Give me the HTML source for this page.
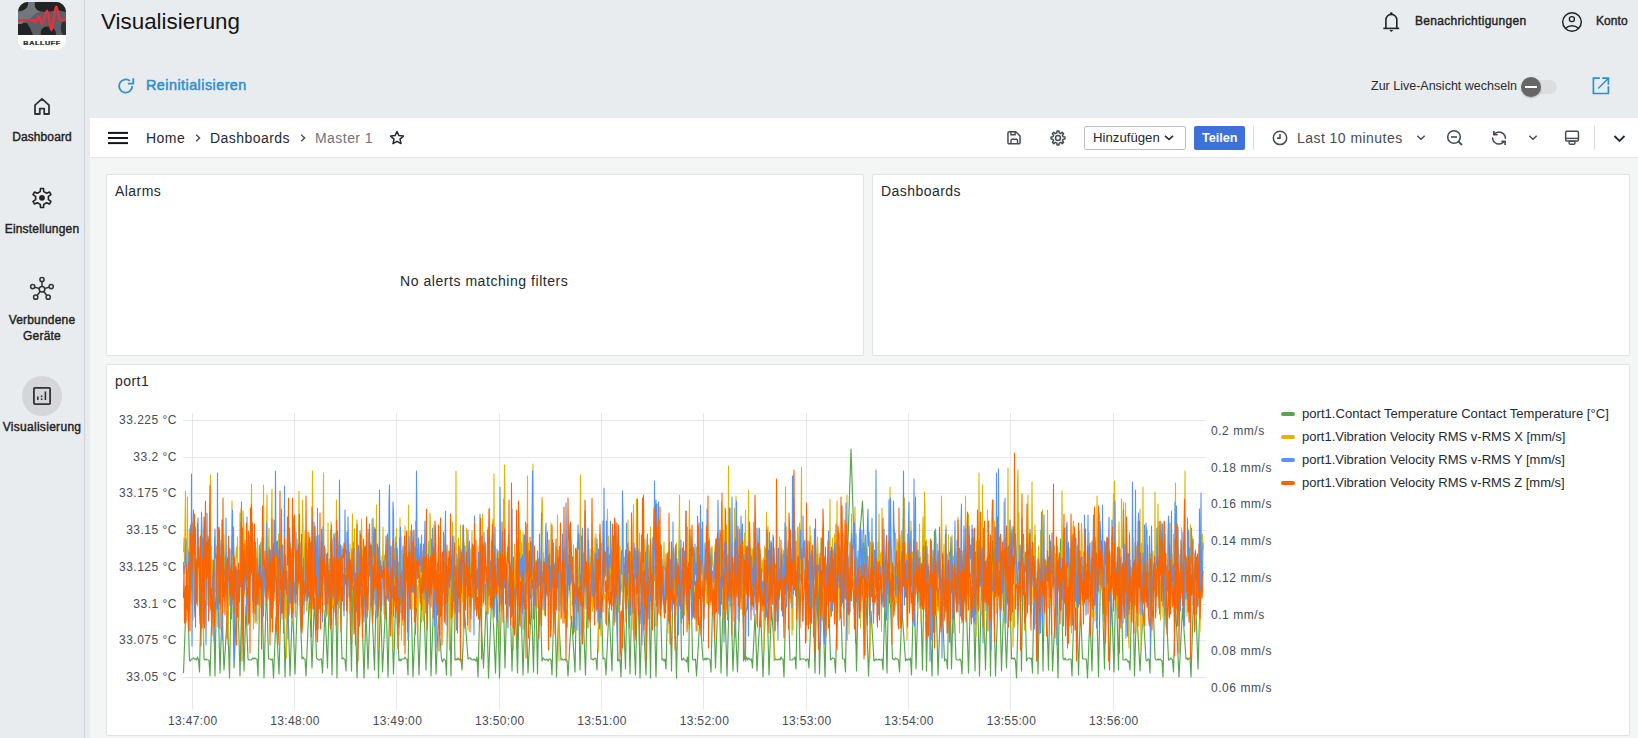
<!DOCTYPE html>
<html><head><meta charset="utf-8">
<style>
*{box-sizing:border-box;margin:0;padding:0}
html,body{width:1638px;height:738px;overflow:hidden;background:#e9ecef;font-family:"Liberation Sans",sans-serif;color:#1b1b1b}
.abs{position:absolute}
.t{position:absolute;white-space:nowrap;line-height:1}
#side{left:0;top:0;width:85px;height:738px;border-right:1px solid #cfd2d6;background:#e9ecef}
.nav{position:absolute;left:0;width:84px;text-align:center;font-size:12px;font-weight:400;color:#222;line-height:16px;-webkit-text-stroke:0.4px #222}
#graf{left:90px;top:118px;width:1548px;height:620px;background:#f4f5f5}
#tb{left:90px;top:118px;width:1548px;height:40px;background:#fff;border-bottom:1px solid #e4e5e6}
.panel{position:absolute;background:#fff;border:1px solid #e1e2e3;border-radius:2px}
.gt{font-size:14px;color:#24292e;letter-spacing:0.45px}
</style></head>
<body>
<!-- sidebar -->
<div id="side" class="abs"></div>

<!-- logo -->
<svg class="abs" style="left:18px;top:2px" width="48" height="48" viewBox="0 0 48 48">
  <defs><clipPath id="lc"><rect x="0" y="0" width="48" height="48" rx="10"/></clipPath></defs>
  <g clip-path="url(#lc)">
    <rect width="48" height="48" fill="#fff"/>
    <rect width="48" height="33" fill="#5b6067"/>
    <path d="M0 0 H11 C12 4 9 9 3 9.5 L0 9.5Z" fill="#222325"/>
    <path d="M16 0 H48 V10 C44 9 40 8 36 9 C30 10 24 10 20 9 C17 7 16 4 16 0Z" fill="#222325"/>
    <path d="M10 0 H17 C16 5 18 8 22 9.5 L17 12 L13 16 L8 19 L0 19 V9.5 C6 9 11 6 10 0Z" fill="#717680"/>
    <path d="M0 21 L9 21 L12 26 L15 33 L0 33Z" fill="#222325"/>
    <path d="M23 33 C22 29 24 25 29 24.5 C34 24 38 27 38 33Z" fill="#222325"/>
    <path d="M44 20 L48 19 V33 H45 C43 30 42 26 44 20Z" fill="#2e3033"/>
    <path d="M0 19 H6 L4 22 L0 22Z" fill="#717680"/>
    <path d="M0 18.1 H16.2 C16.8 18.1 17 21 17.6 20.6 C18.6 19.8 19.6 14 20.6 14.2 C21.8 14.4 23 22 24.2 22 C25.8 22 27.5 8.4 29.1 8.6 C30.8 8.8 31.8 28.4 33.3 28.3 C35 28.2 36.6 4.5 38.3 4.7 C39.8 4.9 40.6 17.6 42 18 H48" fill="none" stroke="#e5323e" stroke-width="2.4" stroke-linejoin="round"/>
  </g>
  <text x="24" y="42.9" text-anchor="middle" font-family="Liberation Sans" font-weight="700" font-size="6.1" letter-spacing="0.5" fill="#1a1a1a" stroke="#1a1a1a" stroke-width="0.25" transform="translate(24 0) scale(1.18 1) translate(-24 0)">BALLUFF</text>
</svg>

<!-- nav items -->
<svg class="abs" style="left:33px;top:97px" width="18" height="19" viewBox="0 0 18 19"><path d="M2 8.2 L9 1.8 L16 8.2 V17 H11.2 V11.6 H6.8 V17 H2 Z" fill="none" stroke="#333" stroke-width="1.8" stroke-linejoin="round"/></svg>
<div class="nav" style="top:129px;letter-spacing:0.1px">Dashboard</div>

<svg class="abs" style="left:31px;top:187px" width="22" height="22" viewBox="0 0 22 22" id="gear1"><path d="M9.23 4.64 L9.50 1.52 L12.50 1.52 L12.77 4.64 L15.62 6.28 L18.46 4.96 L19.96 7.56 L17.39 9.36 L17.39 12.64 L19.96 14.44 L18.46 17.04 L15.62 15.72 L12.77 17.36 L12.50 20.48 L9.50 20.48 L9.23 17.36 L6.38 15.72 L3.54 17.04 L2.04 14.44 L4.61 12.64 L4.61 9.36 L2.04 7.56 L3.54 4.96 L6.38 6.28Z" fill="none" stroke="#222" stroke-width="1.6" stroke-linejoin="round"/><circle cx="11" cy="10.8" r="2.9" fill="#222"/></svg>
<div class="nav" style="top:221px;letter-spacing:0.2px">Einstellungen</div>

<svg class="abs" style="left:29px;top:276px" width="26" height="26" viewBox="0 0 26 26">
  <g fill="none" stroke="#333" stroke-width="1.5">
    <line x1="13" y1="13.3" x2="13" y2="4.5"/><line x1="13" y1="13.3" x2="3.7" y2="10.6"/><line x1="13" y1="13.3" x2="22.2" y2="10.6"/>
    <line x1="13" y1="13.3" x2="6.7" y2="21.2"/><line x1="13" y1="13.3" x2="19.2" y2="21.2"/>
  </g>
  <g fill="#e9ecef" stroke="#333" stroke-width="1.5">
    <circle cx="13" cy="13.3" r="2.8"/><circle cx="13" cy="3.5" r="2.1"/><circle cx="3.7" cy="10.6" r="2.1"/><circle cx="22.2" cy="10.6" r="2.1"/><circle cx="6.7" cy="21.2" r="2.1"/><circle cx="19.2" cy="21.2" r="2.1"/>
  </g>
</svg>
<div class="nav" style="top:312px;letter-spacing:0.2px">Verbundene<br>Geräte</div>

<div class="abs" style="left:22px;top:376px;width:40px;height:40px;border-radius:50%;background:#d4d6d9"></div>
<svg class="abs" style="left:32px;top:386px" width="20" height="20" viewBox="0 0 20 20">
  <rect x="1.9" y="1.9" width="16.2" height="16.2" rx="1" fill="none" stroke="#333" stroke-width="1.8"/>
  <rect x="5" y="10.5" width="1.6" height="3.5" fill="#333"/><rect x="8.8" y="9.5" width="1.6" height="1.6" fill="#333"/><rect x="8.8" y="12.4" width="1.6" height="1.6" fill="#333"/><rect x="12.6" y="5.5" width="1.6" height="8.5" fill="#333"/>
</svg>
<div class="nav" style="top:419px;letter-spacing:0.3px">Visualisierung</div>

<!-- header -->
<div class="t" style="left:101px;top:11px;font-size:22.4px;color:#151515">Visualisierung</div>

<svg class="abs" style="left:116px;top:76px" width="20" height="20" viewBox="0 0 20 20">
  <path d="M16.3 10 A6.6 6.6 0 1 1 13.9 4.9" fill="none" stroke="#2f8fcf" stroke-width="1.8"/>
  <path d="M17.3 2.2 V7.6 H11.9" fill="none" stroke="#2f8fcf" stroke-width="1.8"/>
</svg>
<div class="t" style="left:146px;top:78px;font-size:14.4px;font-weight:400;color:#2f8fcf;letter-spacing:0.45px;-webkit-text-stroke:0.5px #2f8fcf">Reinitialisieren</div>

<!-- top right -->
<svg class="abs" style="left:1381px;top:11px" width="20" height="22" viewBox="0 0 20 22">
  <path d="M4.9 17.3 V8.8 A5.45 5.45 0 0 1 15.8 8.8 V17.3" fill="none" stroke="#222" stroke-width="1.6"/>
  <line x1="2.3" y1="17.4" x2="18.2" y2="17.4" stroke="#222" stroke-width="1.6"/>
  <path d="M9.3 1.3 H11.3 L11.6 3.6 H9Z" fill="#222"/>
  <path d="M8.3 19.1 H12.3 L10.3 21.1Z" fill="#222"/>
</svg>
<div class="t" style="left:1415px;top:15px;font-size:12px;font-weight:400;color:#222;letter-spacing:0.3px;-webkit-text-stroke:0.4px #222">Benachrichtigungen</div>
<svg class="abs" style="left:1561px;top:11px" width="22" height="22" viewBox="0 0 22 22">
  <circle cx="11" cy="11" r="9.3" fill="none" stroke="#222" stroke-width="1.5"/>
  <circle cx="10.9" cy="8.1" r="2.55" fill="none" stroke="#222" stroke-width="1.35"/>
  <path d="M4.3 17.3 Q11 12 17.7 17.3" fill="none" stroke="#222" stroke-width="1.5"/>
</svg>
<div class="t" style="left:1596px;top:15px;font-size:12px;font-weight:400;color:#222;letter-spacing:0.05px;-webkit-text-stroke:0.4px #222">Konto</div>

<div class="t" style="left:1371px;top:80px;font-size:12.5px;color:#2b2b2b">Zur Live-Ansicht wechseln</div>
<div class="abs" style="left:1522px;top:80px;width:35px;height:14px;border-radius:7px;background:#dcdddf"></div>
<div class="abs" style="left:1521px;top:77px;width:20px;height:20px;border-radius:50%;background:#666;box-shadow:0 1px 2px rgba(0,0,0,.25)"></div>
<div class="abs" style="left:1525px;top:86px;width:12px;height:2.4px;background:#fff"></div>
<svg class="abs" style="left:1591px;top:76px" width="20" height="20" viewBox="0 0 20 20">
  <path d="M8.9 2.2 H2.4 V17.5 H17.4 V10.2" fill="none" stroke="#2f8fcf" stroke-width="1.7"/>
  <path d="M11.3 2.2 H17.4 V8.7" fill="none" stroke="#2f8fcf" stroke-width="1.7"/>
  <line x1="17.2" y1="2.4" x2="7.2" y2="12.4" stroke="#2f8fcf" stroke-width="1.4"/>
</svg>

<!-- grafana -->
<div id="graf" class="abs"></div>
<div id="tb" class="abs"></div>

<svg class="abs" style="left:107px;top:131px" width="22" height="14" viewBox="0 0 22 14">
  <g stroke="#111317" stroke-width="2"><line x1="1" y1="1.9" x2="21" y2="1.9"/><line x1="1" y1="7" x2="21" y2="7"/><line x1="1" y1="12.1" x2="21" y2="12.1"/></g>
</svg>
<div class="t gt" style="left:146px;top:131px">Home</div>
<svg class="abs" style="left:194px;top:133px" width="8" height="10" viewBox="0 0 8 10"><path d="M2.2 1.8 L5.6 5 L2.2 8.2" fill="none" stroke="#464c54" stroke-width="1.4"/></svg>
<div class="t gt" style="left:210px;top:131px">Dashboards</div>
<svg class="abs" style="left:299px;top:133px" width="8" height="10" viewBox="0 0 8 10"><path d="M2.2 1.8 L5.6 5 L2.2 8.2" fill="none" stroke="#464c54" stroke-width="1.4"/></svg>
<div class="t gt" style="left:315px;top:131px;color:#6e737a">Master 1</div>
<svg class="abs" style="left:389px;top:130px" width="16" height="16" viewBox="0 0 16 16">
  <path d="M8 1.5 L9.9 5.6 L14.4 6.1 L11 9.1 L12 13.6 L8 11.3 L4 13.6 L5 9.1 L1.6 6.1 L6.1 5.6Z" fill="none" stroke="#24292e" stroke-width="1.5" stroke-linejoin="round"/>
</svg>

<!-- right toolbar -->
<svg class="abs" style="left:1005px;top:130px" width="18" height="17" viewBox="0 0 18 17">
  <path d="M4.2 1.8 H10.8 L15.05 6.05 V12.6 A1.25 1.25 0 0 1 13.8 13.85 H4.2 A1.25 1.25 0 0 1 2.95 12.6 V3.05 A1.25 1.25 0 0 1 4.2 1.8Z" fill="none" stroke="#464c54" stroke-width="1.5" stroke-linejoin="round"/>
  <path d="M5.9 1.8 V4.7 H10.1 V1.8" fill="none" stroke="#464c54" stroke-width="1.4"/>
  <path d="M6 13.85 V10.4 A1.1 1.1 0 0 1 7.1 9.3 H11.4 A1.1 1.1 0 0 1 12.5 10.4 V13.85" fill="none" stroke="#464c54" stroke-width="1.4"/>
</svg>
<svg class="abs" style="left:1049px;top:129px" width="18" height="18" viewBox="0 0 18 18" id="gear2"><path d="M7.83 3.93 L8.01 2.07 L9.99 2.07 L10.17 3.93 L11.75 4.59 L13.20 3.40 L14.60 4.80 L13.41 6.25 L14.07 7.83 L15.93 8.01 L15.93 9.99 L14.07 10.17 L13.41 11.75 L14.60 13.20 L13.20 14.60 L11.75 13.41 L10.17 14.07 L9.99 15.93 L8.01 15.93 L7.83 14.07 L6.25 13.41 L4.80 14.60 L3.40 13.20 L4.59 11.75 L3.93 10.17 L2.07 9.99 L2.07 8.01 L3.93 7.83 L4.59 6.25 L3.40 4.80 L4.80 3.40 L6.25 4.59Z" fill="none" stroke="#464c54" stroke-width="1.5" stroke-linejoin="round"/><circle cx="9" cy="9" r="2.5" fill="none" stroke="#464c54" stroke-width="1.5"/></svg>
<div class="abs" style="left:1084px;top:126px;width:102px;height:24px;border:1px solid #bcbec2;border-radius:2px;background:#fff"></div>
<div class="t" style="left:1093px;top:131px;font-size:13.2px;color:#24292e">Hinzufügen</div>
<svg class="abs" style="left:1163px;top:133px" width="12" height="9" viewBox="0 0 12 9"><path d="M2 2.8 L6 6.5 L10 2.8" fill="none" stroke="#24292e" stroke-width="1.6"/></svg>
<div class="abs" style="left:1194px;top:126px;width:51px;height:24px;border-radius:2px;background:#3d71d9"></div>
<div class="t" style="left:1202px;top:132px;font-size:12.6px;font-weight:700;color:#fff">Teilen</div>
<div class="abs" style="left:1253px;top:126px;width:1px;height:24px;background:#dcdde0"></div>

<svg class="abs" style="left:1271px;top:129px" width="18" height="18" viewBox="0 0 18 18">
  <circle cx="9" cy="8.9" r="6.7" fill="none" stroke="#464c54" stroke-width="1.5"/>
  <path d="M9 4.9 V9.1 H6.1" fill="none" stroke="#464c54" stroke-width="1.6"/>
</svg>
<div class="t" style="left:1297px;top:131px;font-size:14px;letter-spacing:0.45px;color:#464c54">Last 10 minutes</div>
<svg class="abs" style="left:1415px;top:133px" width="12" height="9" viewBox="0 0 12 9"><path d="M2.3 2.8 L6 6.3 L9.7 2.8" fill="none" stroke="#464c54" stroke-width="1.5"/></svg>
<svg class="abs" style="left:1446px;top:129px" width="18" height="18" viewBox="0 0 18 18">
  <circle cx="8" cy="8" r="6.3" fill="none" stroke="#464c54" stroke-width="1.6"/>
  <line x1="5" y1="8" x2="11" y2="8" stroke="#464c54" stroke-width="1.6"/>
  <line x1="12.6" y1="12.6" x2="16" y2="16" stroke="#464c54" stroke-width="1.8"/>
</svg>
<svg class="abs" style="left:1490px;top:129px" width="18" height="18" viewBox="0 0 18 18">
  <path d="M4.2 5.2 A6.4 6.4 0 0 1 15.4 9.2" fill="none" stroke="#464c54" stroke-width="1.6" stroke-linecap="round"/>
  <path d="M2.6 9 A6.4 6.4 0 0 0 13.8 12.8" fill="none" stroke="#464c54" stroke-width="1.6" stroke-linecap="round"/>
  <path d="M3.9 1.9 V5.6 H7.6" fill="none" stroke="#464c54" stroke-width="1.7"/>
  <path d="M15.1 15.9 V12.4 H11.4" fill="none" stroke="#464c54" stroke-width="1.7"/>
</svg>
<svg class="abs" style="left:1527px;top:133px" width="12" height="9" viewBox="0 0 12 9"><path d="M2.3 2.8 L6 6.3 L9.7 2.8" fill="none" stroke="#464c54" stroke-width="1.5"/></svg>
<svg class="abs" style="left:1562px;top:129px" width="19" height="18" viewBox="0 0 19 18">
  <rect x="3.65" y="2.35" width="12.8" height="9.7" rx="1.3" fill="none" stroke="#464c54" stroke-width="1.5"/>
  <line x1="3.65" y1="9.4" x2="16.45" y2="9.4" stroke="#464c54" stroke-width="1.4"/>
  <rect x="7.1" y="12.1" width="5.9" height="3.1" rx="1.2" fill="none" stroke="#464c54" stroke-width="1.4"/>
</svg>
<div class="abs" style="left:1594px;top:126px;width:1px;height:24px;background:#dcdde0"></div>
<svg class="abs" style="left:1612px;top:132px" width="15" height="14" viewBox="0 0 15 14"><path d="M2.5 4 L7.5 9 L12.5 4" fill="none" stroke="#24292e" stroke-width="1.8"/></svg>

<!-- panels -->
<div class="panel" style="left:106px;top:174px;width:758px;height:182px"></div>
<div class="t gt" style="left:115px;top:184px">Alarms</div>
<div class="t" style="left:400px;top:274px;font-size:14px;letter-spacing:0.55px;color:#24292e">No alerts matching filters</div>

<div class="panel" style="left:872px;top:174px;width:758px;height:182px"></div>
<div class="t gt" style="left:881px;top:184px">Dashboards</div>

<div class="panel" style="left:106px;top:364px;width:1524px;height:372px"></div>
<div class="t gt" style="left:115px;top:374px">port1</div>

<svg class="abs" style="left:0;top:0" width="1638" height="738" viewBox="0 0 1638 738">
<g stroke="#e6e7e8" stroke-width="1"><line x1="183" y1="420.5" x2="1206" y2="420.5"/><line x1="183" y1="457.5" x2="1206" y2="457.5"/><line x1="183" y1="493.5" x2="1206" y2="493.5"/><line x1="183" y1="530.5" x2="1206" y2="530.5"/><line x1="183" y1="567.5" x2="1206" y2="567.5"/><line x1="183" y1="604.5" x2="1206" y2="604.5"/><line x1="183" y1="640.5" x2="1206" y2="640.5"/><line x1="183" y1="677.5" x2="1206" y2="677.5"/><line x1="192.5" y1="413" x2="192.5" y2="710"/><line x1="294.5" y1="413" x2="294.5" y2="710"/><line x1="396.5" y1="413" x2="396.5" y2="710"/><line x1="499.5" y1="413" x2="499.5" y2="710"/><line x1="601.5" y1="413" x2="601.5" y2="710"/><line x1="703.5" y1="413" x2="703.5" y2="710"/><line x1="806.5" y1="413" x2="806.5" y2="710"/><line x1="908.5" y1="413" x2="908.5" y2="710"/><line x1="1010.5" y1="413" x2="1010.5" y2="710"/><line x1="1113.5" y1="413" x2="1113.5" y2="710"/></g>
<g fill="none" stroke-width="1.1" stroke-linejoin="round">
<polyline stroke="#56a64b" stroke-width="1.15" points="183.5,673 187.0,578 189.5,660 190.5,661 191.5,659 192.5,659 193.5,658 194.5,659 195.5,659 196.5,660 197.5,657 198.5,660 199.5,672 202.0,563 204.0,659 205.0,660 206.0,659 207.0,660 208.0,660 209.0,660 210.0,676 213.0,574 215.0,676 217.0,556 220.0,673 222.0,612 224.0,670 227.5,612 229.5,678 232.0,537 234.0,668 237.5,581 240.0,676 242.0,591 244.0,671 246.0,606 248.0,659 249.0,660 250.0,660 251.0,660 252.0,659 253.0,658 254.0,659 255.0,658 256.0,659 257.0,659 258.0,676 261.0,542 264.0,678 266.5,584 268.5,659 269.5,659 270.5,659 271.5,660 272.5,659 273.5,678 276.0,617 279.0,674 282.5,545 285.0,677 287.5,591 290.0,676 292.5,604 295.0,674 298.5,565 302.0,659 303.0,657 304.0,659 305.0,659 306.0,676 309.5,592 312.0,668 314.5,598 316.5,658 317.5,659 318.5,660 319.5,660 320.5,659 321.5,659 322.5,673 325.0,610 327.5,668 330.0,566 332.0,675 335.0,533 337.0,678 339.0,554 342.0,659 343.0,658 344.0,659 345.0,660 346.0,671 348.5,548 351.5,671 353.5,542 357.0,678 360.5,568 364.0,678 366.0,611 368.0,669 371.0,584 374.5,670 376.5,573 378.5,678 380.5,598 382.5,672 386.0,596 388.0,677 390.5,573 393.5,674 396.0,589 399.0,661 400.0,659 401.0,661 402.0,659 403.0,659 404.0,659 405.0,657 406.0,659 407.0,659 408.0,675 410.0,556 413.0,677 416.5,594 419.0,675 422.5,559 426.0,670 429.0,541 431.0,676 434.0,591 436.0,674 438.5,616 441.5,659 442.5,662 443.5,659 444.5,659 445.5,661 446.5,675 448.5,558 451.0,676 453.0,552 455.0,660 456.0,659 457.0,660 458.0,658 459.0,660 460.0,659 461.0,659 462.0,670 464.5,611 468.0,659 469.0,658 470.0,658 471.0,659 472.0,660 473.0,660 474.0,659 475.0,660 476.0,661 477.0,657 478.0,677 480.0,599 483.5,668 486.5,595 488.5,678 492.0,588 495.5,673 497.5,599 499.5,678 502.5,558 505.0,668 508.5,535 512.0,671 514.5,580 517.5,673 520.0,572 523.0,675 525.5,591 528.0,673 531.5,601 533.5,672 535.5,571 537.5,674 539.5,575 542.0,661 543.0,658 544.0,659 545.0,660 546.0,660 547.0,659 548.0,661 549.0,659 550.0,659 551.0,660 552.0,675 554.5,581 556.5,677 558.5,615 561.0,660 562.0,659 563.0,660 564.0,660 565.0,659 566.0,660 567.0,660 568.0,676 571.5,616 575.0,672 577.5,542 580.0,670 582.5,598 585.5,675 588.5,540 591.0,659 592.0,659 593.0,660 594.0,659 595.0,658 596.0,659 597.0,670 600.5,570 603.0,659 604.0,658 605.0,659 606.0,675 609.0,608 612.0,671 614.5,548 618.0,659 619.0,661 620.0,659 621.0,677 623.0,600 625.5,669 627.5,567 630.0,674 632.0,589 635.5,675 638.0,565 640.0,678 642.5,602 646.0,675 648.5,565 650.5,678 652.5,548 656.0,677 659.0,547 662.0,660 663.0,659 664.0,661 665.0,659 666.0,669 669.0,551 671.5,671 673.5,548 676.5,678 679.5,531 681.5,660 682.5,660 683.5,658 684.5,660 685.5,660 686.5,662 687.5,657 688.5,672 690.5,551 692.5,659 693.5,660 694.5,660 695.5,659 696.5,676 700.0,617 703.0,660 704.0,660 705.0,658 706.0,660 707.0,658 708.0,659 709.0,659 710.0,660 711.0,672 713.0,584 715.5,668 719.0,571 721.0,673 724.0,572 727.0,676 730.0,569 733.0,671 735.0,617 737.5,672 741.0,552 744.5,659 745.5,660 746.5,657 747.5,660 748.5,658 749.5,659 750.5,660 751.5,659 752.5,668 755.0,614 757.0,671 760.5,606 763.0,677 766.5,578 769.0,675 771.5,607 775.0,660 776.0,659 777.0,660 778.0,660 779.0,659 780.0,660 781.0,657 782.0,659 783.0,659 784.0,677 787.0,549 790.0,660 791.0,660 792.0,660 793.0,659 794.0,659 795.0,657 796.0,669 798.0,563 800.0,660 801.0,659 802.0,659 803.0,659 804.0,659 805.0,659 806.0,661 807.0,659 808.0,659 809.0,668 812.5,576 815.0,673 817.5,544 819.5,674 822.0,579 825.0,677 827.5,561 830.5,660 831.5,659 832.5,658 833.5,658 834.5,659 835.5,673 839.0,546 842.5,659 843.5,659 844.5,659 845.5,672 847.5,557 851.0,449 854.0,541 856.5,671 859.5,538 862.5,501 865.5,580 868.5,676 871.0,611 874.0,661 875.0,660 876.0,659 877.0,660 878.0,660 879.0,659 880.0,660 881.0,660 882.0,659 883.0,670 885.0,599 887.0,673 889.0,561 892.5,659 893.5,659 894.5,660 895.5,658 896.5,659 897.5,659 898.5,660 899.5,672 902.0,610 905.5,661 906.5,659 907.5,660 908.5,659 909.5,660 910.5,658 911.5,675 914.0,575 916.0,669 919.5,552 922.5,670 924.5,540 926.5,671 928.5,581 932.0,676 934.5,531 938.0,675 941.5,581 944.5,661 945.5,659 946.5,660 947.5,669 949.5,552 951.5,669 953.5,591 956.0,659 957.0,660 958.0,660 959.0,660 960.0,659 961.0,661 962.0,674 965.0,563 968.5,673 972.0,538 975.0,671 977.0,576 979.5,676 982.0,548 985.5,670 988.5,549 990.5,676 992.5,541 995.5,676 999.0,565 1001.5,671 1004.0,595 1006.5,668 1009.5,573 1011.5,659 1012.5,658 1013.5,659 1014.5,658 1015.5,661 1016.5,678 1019.5,564 1021.5,671 1023.5,534 1026.5,661 1027.5,658 1028.5,658 1029.5,658 1030.5,659 1031.5,658 1032.5,673 1035.0,535 1038.0,674 1041.0,530 1043.0,671 1045.0,559 1048.5,670 1050.5,561 1052.5,671 1056.0,597 1058.0,678 1060.5,539 1063.0,658 1064.0,660 1065.0,658 1066.0,660 1067.0,660 1068.0,660 1069.0,659 1070.0,659 1071.0,659 1072.0,676 1075.5,554 1078.5,675 1080.5,606 1082.5,659 1083.5,659 1084.5,659 1085.5,659 1086.5,660 1087.5,678 1090.0,615 1092.0,671 1095.0,537 1098.5,677 1101.0,551 1104.5,669 1106.5,554 1109.5,670 1111.5,595 1114.0,672 1116.0,569 1118.5,670 1120.5,564 1123.0,660 1124.0,660 1125.0,660 1126.0,659 1127.0,660 1128.0,662 1129.0,661 1130.0,670 1132.5,568 1134.5,676 1136.5,606 1140.0,671 1143.0,610 1146.0,660 1147.0,661 1148.0,659 1149.0,659 1150.0,673 1152.0,569 1155.0,658 1156.0,660 1157.0,660 1158.0,659 1159.0,660 1160.0,659 1161.0,660 1162.0,661 1163.0,677 1165.0,578 1168.5,660 1169.5,660 1170.5,658 1171.5,659 1172.5,660 1173.5,672 1175.5,604 1179.0,677 1182.5,608 1186.0,659 1187.0,658 1188.0,660 1189.0,658 1190.0,658 1191.0,677 1194.5,565 1198.0,669 1201.5,552"/>
<polyline stroke="#e0b400" points="183.5,552 184.0,538 184.5,563 185.0,526 185.5,491 186.0,574 186.5,568 187.0,620 187.5,497 188.0,600 188.5,549 189.0,581 189.5,529 190.0,529 190.5,591 191.0,603 191.5,570 192.0,592 192.5,572 193.0,620 193.5,551 194.0,552 194.5,523 195.0,600 195.5,599 196.0,565 196.5,562 197.0,572 197.5,606 198.0,573 198.5,567 199.0,537 199.5,567 200.0,558 200.5,595 201.0,543 201.5,528 202.0,553 202.5,590 203.0,611 203.5,642 204.0,528 204.5,550 205.0,595 205.5,562 206.0,585 206.5,569 207.0,605 207.5,575 208.0,551 208.5,551 209.0,563 209.5,574 210.0,605 210.5,475 211.0,581 211.5,546 212.0,599 212.5,560 213.0,593 213.5,573 214.0,578 214.5,537 215.0,568 215.5,592 216.0,584 216.5,561 217.0,582 217.5,544 218.0,569 218.5,582 219.0,585 219.5,593 220.0,573 220.5,605 221.0,544 221.5,587 222.0,628 222.5,543 223.0,572 223.5,554 224.0,535 224.5,577 225.0,566 225.5,555 226.0,587 226.5,562 227.0,578 227.5,581 228.0,645 228.5,608 229.0,579 229.5,548 230.0,577 230.5,565 231.0,567 231.5,572 232.0,501 232.5,601 233.0,577 233.5,546 234.0,565 234.5,556 235.0,614 235.5,597 236.0,553 236.5,547 237.0,558 237.5,537 238.0,604 238.5,600 239.0,621 239.5,572 240.0,513 240.5,542 241.0,509 241.5,586 242.0,564 242.5,595 243.0,511 243.5,520 244.0,531 244.5,594 245.0,540 245.5,551 246.0,581 246.5,550 247.0,540 247.5,578 248.0,547 248.5,609 249.0,559 249.5,590 250.0,559 250.5,525 251.0,563 251.5,484 252.0,570 252.5,539 253.0,572 253.5,629 254.0,557 254.5,560 255.0,623 255.5,563 256.0,548 256.5,557 257.0,624 257.5,538 258.0,570 258.5,575 259.0,620 259.5,559 260.0,608 260.5,566 261.0,597 261.5,585 262.0,537 262.5,544 263.0,560 263.5,485 264.0,564 264.5,567 265.0,563 265.5,609 266.0,551 266.5,528 267.0,495 267.5,585 268.0,586 268.5,546 269.0,528 269.5,582 270.0,591 270.5,632 271.0,586 271.5,513 272.0,489 272.5,610 273.0,602 273.5,543 274.0,588 274.5,539 275.0,574 275.5,554 276.0,591 276.5,559 277.0,543 277.5,569 278.0,569 278.5,534 279.0,567 279.5,544 280.0,588 280.5,559 281.0,559 281.5,568 282.0,619 282.5,598 283.0,562 283.5,615 284.0,581 284.5,577 285.0,618 285.5,575 286.0,572 286.5,658 287.0,618 287.5,579 288.0,624 288.5,609 289.0,536 289.5,603 290.0,549 290.5,543 291.0,608 291.5,564 292.0,621 292.5,540 293.0,621 293.5,584 294.0,585 294.5,583 295.0,595 295.5,617 296.0,573 296.5,594 297.0,539 297.5,568 298.0,566 298.5,533 299.0,491 299.5,604 300.0,562 300.5,599 301.0,603 301.5,572 302.0,613 302.5,500 303.0,526 303.5,605 304.0,592 304.5,549 305.0,531 305.5,572 306.0,565 306.5,611 307.0,611 307.5,587 308.0,577 308.5,561 309.0,533 309.5,572 310.0,537 310.5,618 311.0,597 311.5,550 312.0,572 312.5,471 313.0,536 313.5,589 314.0,582 314.5,527 315.0,584 315.5,561 316.0,552 316.5,611 317.0,542 317.5,553 318.0,561 318.5,560 319.0,555 319.5,592 320.0,567 320.5,611 321.0,555 321.5,598 322.0,583 322.5,582 323.0,551 323.5,473 324.0,565 324.5,584 325.0,591 325.5,577 326.0,607 326.5,617 327.0,603 327.5,601 328.0,523 328.5,594 329.0,616 329.5,559 330.0,588 330.5,628 331.0,522 331.5,589 332.0,589 332.5,608 333.0,603 333.5,534 334.0,605 334.5,583 335.0,605 335.5,610 336.0,557 336.5,500 337.0,564 337.5,536 338.0,562 338.5,582 339.0,545 339.5,608 340.0,546 340.5,589 341.0,623 341.5,590 342.0,590 342.5,557 343.0,555 343.5,608 344.0,611 344.5,549 345.0,573 345.5,572 346.0,568 346.5,605 347.0,589 347.5,586 348.0,585 348.5,552 349.0,584 349.5,612 350.0,544 350.5,576 351.0,594 351.5,625 352.0,551 352.5,514 353.0,587 353.5,570 354.0,591 354.5,529 355.0,615 355.5,633 356.0,569 356.5,538 357.0,520 357.5,599 358.0,603 358.5,545 359.0,580 359.5,595 360.0,591 360.5,565 361.0,552 361.5,519 362.0,548 362.5,582 363.0,554 363.5,548 364.0,551 364.5,568 365.0,554 365.5,553 366.0,608 366.5,583 367.0,596 367.5,618 368.0,583 368.5,577 369.0,533 369.5,563 370.0,580 370.5,574 371.0,602 371.5,576 372.0,519 372.5,557 373.0,558 373.5,615 374.0,584 374.5,527 375.0,583 375.5,610 376.0,554 376.5,505 377.0,601 377.5,615 378.0,649 378.5,554 379.0,599 379.5,549 380.0,564 380.5,582 381.0,570 381.5,572 382.0,556 382.5,567 383.0,527 383.5,581 384.0,614 384.5,555 385.0,599 385.5,560 386.0,550 386.5,558 387.0,569 387.5,592 388.0,597 388.5,596 389.0,539 389.5,568 390.0,561 390.5,603 391.0,547 391.5,585 392.0,572 392.5,573 393.0,648 393.5,594 394.0,549 394.5,606 395.0,550 395.5,537 396.0,606 396.5,528 397.0,557 397.5,595 398.0,570 398.5,562 399.0,635 399.5,610 400.0,518 400.5,605 401.0,537 401.5,640 402.0,550 402.5,604 403.0,625 403.5,555 404.0,645 404.5,577 405.0,526 405.5,557 406.0,581 406.5,541 407.0,581 407.5,573 408.0,589 408.5,505 409.0,587 409.5,570 410.0,552 410.5,575 411.0,582 411.5,577 412.0,609 412.5,543 413.0,554 413.5,537 414.0,593 414.5,600 415.0,571 415.5,521 416.0,568 416.5,608 417.0,585 417.5,589 418.0,632 418.5,580 419.0,580 419.5,576 420.0,588 420.5,553 421.0,569 421.5,622 422.0,581 422.5,590 423.0,619 423.5,621 424.0,566 424.5,609 425.0,613 425.5,570 426.0,558 426.5,616 427.0,625 427.5,595 428.0,571 428.5,574 429.0,566 429.5,563 430.0,513 430.5,523 431.0,593 431.5,556 432.0,555 432.5,582 433.0,548 433.5,552 434.0,525 434.5,558 435.0,589 435.5,598 436.0,587 436.5,572 437.0,571 437.5,569 438.0,589 438.5,625 439.0,582 439.5,583 440.0,586 440.5,543 441.0,565 441.5,593 442.0,564 442.5,553 443.0,571 443.5,551 444.0,564 444.5,554 445.0,535 445.5,624 446.0,569 446.5,557 447.0,614 447.5,581 448.0,566 448.5,568 449.0,628 449.5,650 450.0,561 450.5,619 451.0,596 451.5,603 452.0,544 452.5,522 453.0,568 453.5,552 454.0,536 454.5,595 455.0,632 455.5,604 456.0,471 456.5,611 457.0,571 457.5,559 458.0,584 458.5,538 459.0,575 459.5,569 460.0,597 460.5,525 461.0,577 461.5,591 462.0,552 462.5,602 463.0,585 463.5,644 464.0,543 464.5,593 465.0,597 465.5,565 466.0,598 466.5,528 467.0,544 467.5,570 468.0,630 468.5,565 469.0,587 469.5,544 470.0,606 470.5,591 471.0,549 471.5,560 472.0,531 472.5,598 473.0,591 473.5,588 474.0,580 474.5,594 475.0,565 475.5,567 476.0,582 476.5,598 477.0,571 477.5,584 478.0,546 478.5,608 479.0,553 479.5,561 480.0,538 480.5,539 481.0,608 481.5,545 482.0,582 482.5,514 483.0,606 483.5,560 484.0,561 484.5,571 485.0,573 485.5,544 486.0,566 486.5,611 487.0,581 487.5,563 488.0,527 488.5,597 489.0,544 489.5,508 490.0,604 490.5,604 491.0,578 491.5,561 492.0,560 492.5,529 493.0,519 493.5,623 494.0,474 494.5,617 495.0,546 495.5,586 496.0,558 496.5,613 497.0,599 497.5,600 498.0,587 498.5,551 499.0,576 499.5,648 500.0,594 500.5,556 501.0,587 501.5,567 502.0,574 502.5,584 503.0,603 503.5,499 504.0,558 504.5,465 505.0,500 505.5,594 506.0,586 506.5,598 507.0,557 507.5,547 508.0,601 508.5,584 509.0,580 509.5,572 510.0,562 510.5,575 511.0,601 511.5,602 512.0,576 512.5,603 513.0,582 513.5,650 514.0,595 514.5,544 515.0,580 515.5,572 516.0,574 516.5,546 517.0,549 517.5,596 518.0,577 518.5,605 519.0,513 519.5,597 520.0,593 520.5,530 521.0,628 521.5,542 522.0,599 522.5,601 523.0,532 523.5,538 524.0,603 524.5,552 525.0,561 525.5,570 526.0,587 526.5,571 527.0,594 527.5,476 528.0,602 528.5,543 529.0,578 529.5,561 530.0,599 530.5,575 531.0,550 531.5,562 532.0,596 532.5,569 533.0,464 533.5,555 534.0,565 534.5,584 535.0,560 535.5,569 536.0,565 536.5,560 537.0,568 537.5,582 538.0,571 538.5,565 539.0,569 539.5,624 540.0,566 540.5,564 541.0,608 541.5,523 542.0,497 542.5,504 543.0,568 543.5,553 544.0,594 544.5,615 545.0,559 545.5,557 546.0,594 546.5,567 547.0,586 547.5,593 548.0,594 548.5,565 549.0,591 549.5,567 550.0,566 550.5,580 551.0,523 551.5,561 552.0,566 552.5,565 553.0,558 553.5,561 554.0,564 554.5,565 555.0,587 555.5,600 556.0,547 556.5,547 557.0,586 557.5,515 558.0,571 558.5,592 559.0,661 559.5,567 560.0,603 560.5,565 561.0,602 561.5,617 562.0,544 562.5,593 563.0,549 563.5,558 564.0,597 564.5,623 565.0,586 565.5,546 566.0,562 566.5,603 567.0,627 567.5,577 568.0,584 568.5,555 569.0,571 569.5,592 570.0,595 570.5,619 571.0,539 571.5,554 572.0,559 572.5,589 573.0,584 573.5,545 574.0,597 574.5,632 575.0,604 575.5,607 576.0,561 576.5,552 577.0,600 577.5,578 578.0,589 578.5,586 579.0,580 579.5,560 580.0,534 580.5,475 581.0,585 581.5,571 582.0,639 582.5,558 583.0,567 583.5,553 584.0,629 584.5,579 585.0,576 585.5,551 586.0,566 586.5,569 587.0,563 587.5,614 588.0,560 588.5,564 589.0,605 589.5,578 590.0,549 590.5,578 591.0,557 591.5,578 592.0,588 592.5,611 593.0,583 593.5,578 594.0,590 594.5,560 595.0,538 595.5,590 596.0,534 596.5,585 597.0,544 597.5,595 598.0,580 598.5,652 599.0,602 599.5,534 600.0,557 600.5,627 601.0,636 601.5,543 602.0,588 602.5,572 603.0,563 603.5,593 604.0,595 604.5,599 605.0,593 605.5,623 606.0,598 606.5,594 607.0,549 607.5,509 608.0,603 608.5,536 609.0,568 609.5,590 610.0,585 610.5,571 611.0,549 611.5,562 612.0,575 612.5,574 613.0,587 613.5,604 614.0,575 614.5,537 615.0,572 615.5,551 616.0,560 616.5,605 617.0,570 617.5,579 618.0,555 618.5,612 619.0,583 619.5,572 620.0,546 620.5,565 621.0,589 621.5,585 622.0,592 622.5,573 623.0,600 623.5,557 624.0,603 624.5,582 625.0,570 625.5,554 626.0,564 626.5,607 627.0,559 627.5,577 628.0,520 628.5,598 629.0,583 629.5,562 630.0,580 630.5,552 631.0,555 631.5,618 632.0,630 632.5,560 633.0,553 633.5,505 634.0,635 634.5,631 635.0,620 635.5,561 636.0,565 636.5,499 637.0,590 637.5,597 638.0,586 638.5,583 639.0,593 639.5,533 640.0,593 640.5,561 641.0,561 641.5,624 642.0,569 642.5,575 643.0,523 643.5,502 644.0,563 644.5,613 645.0,539 645.5,567 646.0,610 646.5,555 647.0,546 647.5,557 648.0,575 648.5,545 649.0,553 649.5,620 650.0,568 650.5,527 651.0,619 651.5,580 652.0,572 652.5,564 653.0,538 653.5,581 654.0,581 654.5,566 655.0,574 655.5,600 656.0,558 656.5,537 657.0,534 657.5,580 658.0,576 658.5,586 659.0,564 659.5,568 660.0,587 660.5,554 661.0,617 661.5,546 662.0,578 662.5,569 663.0,567 663.5,567 664.0,542 664.5,570 665.0,562 665.5,577 666.0,603 666.5,579 667.0,576 667.5,612 668.0,633 668.5,568 669.0,620 669.5,542 670.0,577 670.5,573 671.0,608 671.5,553 672.0,582 672.5,587 673.0,551 673.5,595 674.0,568 674.5,568 675.0,637 675.5,566 676.0,615 676.5,543 677.0,591 677.5,583 678.0,562 678.5,584 679.0,551 679.5,495 680.0,572 680.5,611 681.0,598 681.5,570 682.0,606 682.5,578 683.0,552 683.5,543 684.0,563 684.5,615 685.0,584 685.5,559 686.0,604 686.5,551 687.0,577 687.5,527 688.0,629 688.5,603 689.0,534 689.5,500 690.0,588 690.5,582 691.0,553 691.5,601 692.0,544 692.5,564 693.0,616 693.5,563 694.0,584 694.5,557 695.0,618 695.5,584 696.0,631 696.5,547 697.0,558 697.5,587 698.0,555 698.5,595 699.0,574 699.5,586 700.0,557 700.5,558 701.0,633 701.5,529 702.0,573 702.5,533 703.0,602 703.5,589 704.0,565 704.5,607 705.0,572 705.5,565 706.0,565 706.5,603 707.0,587 707.5,604 708.0,552 708.5,616 709.0,562 709.5,538 710.0,573 710.5,605 711.0,582 711.5,601 712.0,546 712.5,558 713.0,566 713.5,566 714.0,615 714.5,622 715.0,545 715.5,613 716.0,539 716.5,541 717.0,598 717.5,620 718.0,566 718.5,549 719.0,545 719.5,565 720.0,538 720.5,601 721.0,595 721.5,502 722.0,569 722.5,581 723.0,619 723.5,530 724.0,563 724.5,634 725.0,508 725.5,570 726.0,554 726.5,525 727.0,614 727.5,610 728.0,580 728.5,466 729.0,571 729.5,586 730.0,607 730.5,596 731.0,584 731.5,569 732.0,598 732.5,556 733.0,572 733.5,569 734.0,560 734.5,508 735.0,575 735.5,567 736.0,496 736.5,587 737.0,591 737.5,529 738.0,619 738.5,596 739.0,593 739.5,532 740.0,594 740.5,558 741.0,543 741.5,598 742.0,591 742.5,614 743.0,578 743.5,589 744.0,590 744.5,533 745.0,583 745.5,510 746.0,584 746.5,569 747.0,556 747.5,574 748.0,589 748.5,490 749.0,554 749.5,578 750.0,591 750.5,547 751.0,566 751.5,579 752.0,549 752.5,567 753.0,586 753.5,522 754.0,571 754.5,561 755.0,531 755.5,602 756.0,584 756.5,573 757.0,547 757.5,609 758.0,586 758.5,587 759.0,544 759.5,562 760.0,572 760.5,554 761.0,578 761.5,612 762.0,560 762.5,572 763.0,570 763.5,558 764.0,650 764.5,546 765.0,551 765.5,549 766.0,571 766.5,512 767.0,576 767.5,593 768.0,526 768.5,612 769.0,598 769.5,599 770.0,575 770.5,564 771.0,547 771.5,566 772.0,547 772.5,582 773.0,560 773.5,556 774.0,661 774.5,572 775.0,604 775.5,564 776.0,591 776.5,564 777.0,549 777.5,585 778.0,557 778.5,621 779.0,607 779.5,537 780.0,582 780.5,555 781.0,589 781.5,557 782.0,548 782.5,600 783.0,562 783.5,550 784.0,554 784.5,560 785.0,592 785.5,487 786.0,570 786.5,586 787.0,588 787.5,579 788.0,540 788.5,557 789.0,619 789.5,565 790.0,580 790.5,603 791.0,548 791.5,555 792.0,635 792.5,595 793.0,630 793.5,474 794.0,549 794.5,526 795.0,568 795.5,581 796.0,583 796.5,589 797.0,608 797.5,529 798.0,527 798.5,576 799.0,574 799.5,523 800.0,535 800.5,580 801.0,526 801.5,467 802.0,601 802.5,561 803.0,581 803.5,573 804.0,551 804.5,550 805.0,540 805.5,574 806.0,554 806.5,591 807.0,604 807.5,564 808.0,568 808.5,567 809.0,573 809.5,563 810.0,526 810.5,557 811.0,536 811.5,598 812.0,571 812.5,608 813.0,592 813.5,577 814.0,580 814.5,580 815.0,573 815.5,579 816.0,608 816.5,554 817.0,553 817.5,537 818.0,561 818.5,585 819.0,571 819.5,558 820.0,584 820.5,584 821.0,538 821.5,576 822.0,581 822.5,528 823.0,584 823.5,587 824.0,557 824.5,556 825.0,567 825.5,625 826.0,568 826.5,564 827.0,602 827.5,556 828.0,587 828.5,572 829.0,558 829.5,552 830.0,499 830.5,617 831.0,574 831.5,592 832.0,567 832.5,538 833.0,604 833.5,585 834.0,562 834.5,534 835.0,585 835.5,564 836.0,543 836.5,608 837.0,501 837.5,580 838.0,541 838.5,529 839.0,599 839.5,620 840.0,590 840.5,554 841.0,551 841.5,600 842.0,543 842.5,599 843.0,561 843.5,583 844.0,553 844.5,544 845.0,550 845.5,599 846.0,593 846.5,553 847.0,495 847.5,553 848.0,596 848.5,558 849.0,634 849.5,604 850.0,585 850.5,558 851.0,589 851.5,514 852.0,573 852.5,576 853.0,581 853.5,607 854.0,604 854.5,542 855.0,507 855.5,555 856.0,569 856.5,557 857.0,558 857.5,576 858.0,560 858.5,560 859.0,568 859.5,569 860.0,582 860.5,628 861.0,585 861.5,566 862.0,600 862.5,593 863.0,539 863.5,578 864.0,567 864.5,594 865.0,582 865.5,553 866.0,547 866.5,570 867.0,549 867.5,610 868.0,570 868.5,569 869.0,598 869.5,594 870.0,658 870.5,542 871.0,586 871.5,581 872.0,547 872.5,600 873.0,545 873.5,619 874.0,578 874.5,562 875.0,564 875.5,578 876.0,586 876.5,561 877.0,591 877.5,575 878.0,542 878.5,572 879.0,514 879.5,562 880.0,554 880.5,576 881.0,552 881.5,631 882.0,508 882.5,566 883.0,555 883.5,601 884.0,585 884.5,577 885.0,569 885.5,590 886.0,613 886.5,535 887.0,568 887.5,615 888.0,580 888.5,544 889.0,548 889.5,538 890.0,487 890.5,558 891.0,604 891.5,573 892.0,569 892.5,564 893.0,565 893.5,617 894.0,567 894.5,590 895.0,588 895.5,533 896.0,573 896.5,603 897.0,539 897.5,588 898.0,542 898.5,555 899.0,621 899.5,544 900.0,535 900.5,607 901.0,556 901.5,531 902.0,553 902.5,580 903.0,519 903.5,585 904.0,559 904.5,498 905.0,541 905.5,583 906.0,568 906.5,554 907.0,640 907.5,534 908.0,566 908.5,572 909.0,557 909.5,538 910.0,579 910.5,565 911.0,521 911.5,582 912.0,554 912.5,552 913.0,596 913.5,579 914.0,603 914.5,563 915.0,605 915.5,587 916.0,556 916.5,552 917.0,575 917.5,579 918.0,565 918.5,582 919.0,571 919.5,524 920.0,601 920.5,557 921.0,623 921.5,606 922.0,590 922.5,543 923.0,517 923.5,582 924.0,573 924.5,492 925.0,507 925.5,621 926.0,544 926.5,540 927.0,594 927.5,600 928.0,554 928.5,604 929.0,570 929.5,578 930.0,605 930.5,581 931.0,604 931.5,639 932.0,606 932.5,558 933.0,558 933.5,574 934.0,601 934.5,579 935.0,632 935.5,587 936.0,570 936.5,615 937.0,573 937.5,544 938.0,611 938.5,607 939.0,599 939.5,621 940.0,561 940.5,624 941.0,556 941.5,496 942.0,546 942.5,580 943.0,553 943.5,558 944.0,544 944.5,619 945.0,570 945.5,570 946.0,525 946.5,571 947.0,593 947.5,617 948.0,599 948.5,535 949.0,558 949.5,558 950.0,560 950.5,588 951.0,549 951.5,593 952.0,535 952.5,551 953.0,588 953.5,633 954.0,589 954.5,572 955.0,571 955.5,596 956.0,551 956.5,566 957.0,604 957.5,604 958.0,517 958.5,579 959.0,574 959.5,633 960.0,559 960.5,551 961.0,557 961.5,567 962.0,585 962.5,597 963.0,555 963.5,603 964.0,554 964.5,548 965.0,577 965.5,496 966.0,619 966.5,612 967.0,582 967.5,576 968.0,595 968.5,514 969.0,572 969.5,597 970.0,581 970.5,596 971.0,576 971.5,573 972.0,608 972.5,550 973.0,555 973.5,586 974.0,603 974.5,604 975.0,585 975.5,571 976.0,636 976.5,541 977.0,584 977.5,555 978.0,582 978.5,562 979.0,473 979.5,555 980.0,585 980.5,587 981.0,577 981.5,584 982.0,616 982.5,485 983.0,559 983.5,619 984.0,639 984.5,585 985.0,574 985.5,599 986.0,583 986.5,588 987.0,577 987.5,510 988.0,589 988.5,580 989.0,543 989.5,589 990.0,604 990.5,597 991.0,573 991.5,605 992.0,563 992.5,567 993.0,595 993.5,550 994.0,604 994.5,521 995.0,544 995.5,528 996.0,582 996.5,570 997.0,582 997.5,560 998.0,574 998.5,553 999.0,598 999.5,556 1000.0,550 1000.5,579 1001.0,539 1001.5,591 1002.0,552 1002.5,583 1003.0,600 1003.5,618 1004.0,502 1004.5,591 1005.0,614 1005.5,538 1006.0,580 1006.5,573 1007.0,564 1007.5,586 1008.0,468 1008.5,590 1009.0,556 1009.5,572 1010.0,520 1010.5,609 1011.0,597 1011.5,621 1012.0,526 1012.5,559 1013.0,647 1013.5,618 1014.0,595 1014.5,627 1015.0,554 1015.5,536 1016.0,564 1016.5,555 1017.0,581 1017.5,485 1018.0,470 1018.5,569 1019.0,512 1019.5,568 1020.0,545 1020.5,575 1021.0,601 1021.5,586 1022.0,555 1022.5,535 1023.0,550 1023.5,581 1024.0,554 1024.5,630 1025.0,595 1025.5,599 1026.0,600 1026.5,578 1027.0,573 1027.5,528 1028.0,495 1028.5,583 1029.0,534 1029.5,570 1030.0,545 1030.5,607 1031.0,592 1031.5,568 1032.0,482 1032.5,560 1033.0,604 1033.5,604 1034.0,571 1034.5,562 1035.0,525 1035.5,601 1036.0,624 1036.5,597 1037.0,599 1037.5,606 1038.0,566 1038.5,546 1039.0,567 1039.5,587 1040.0,595 1040.5,536 1041.0,615 1041.5,596 1042.0,544 1042.5,510 1043.0,541 1043.5,571 1044.0,602 1044.5,614 1045.0,569 1045.5,590 1046.0,561 1046.5,581 1047.0,575 1047.5,510 1048.0,588 1048.5,576 1049.0,559 1049.5,571 1050.0,604 1050.5,589 1051.0,565 1051.5,566 1052.0,557 1052.5,577 1053.0,589 1053.5,588 1054.0,558 1054.5,546 1055.0,582 1055.5,554 1056.0,573 1056.5,626 1057.0,577 1057.5,546 1058.0,556 1058.5,590 1059.0,557 1059.5,576 1060.0,569 1060.5,589 1061.0,551 1061.5,597 1062.0,491 1062.5,579 1063.0,530 1063.5,595 1064.0,561 1064.5,577 1065.0,567 1065.5,569 1066.0,571 1066.5,583 1067.0,596 1067.5,549 1068.0,568 1068.5,587 1069.0,548 1069.5,606 1070.0,577 1070.5,549 1071.0,550 1071.5,633 1072.0,536 1072.5,578 1073.0,527 1073.5,521 1074.0,565 1074.5,555 1075.0,575 1075.5,571 1076.0,569 1076.5,562 1077.0,546 1077.5,620 1078.0,590 1078.5,588 1079.0,595 1079.5,531 1080.0,604 1080.5,560 1081.0,570 1081.5,523 1082.0,535 1082.5,605 1083.0,570 1083.5,566 1084.0,587 1084.5,578 1085.0,592 1085.5,599 1086.0,587 1086.5,564 1087.0,581 1087.5,581 1088.0,560 1088.5,598 1089.0,532 1089.5,602 1090.0,595 1090.5,586 1091.0,559 1091.5,564 1092.0,594 1092.5,617 1093.0,580 1093.5,563 1094.0,596 1094.5,550 1095.0,621 1095.5,554 1096.0,561 1096.5,601 1097.0,496 1097.5,544 1098.0,564 1098.5,550 1099.0,594 1099.5,513 1100.0,575 1100.5,563 1101.0,590 1101.5,574 1102.0,578 1102.5,534 1103.0,549 1103.5,577 1104.0,603 1104.5,561 1105.0,623 1105.5,555 1106.0,612 1106.5,615 1107.0,598 1107.5,540 1108.0,569 1108.5,592 1109.0,549 1109.5,575 1110.0,601 1110.5,602 1111.0,606 1111.5,536 1112.0,595 1112.5,583 1113.0,522 1113.5,494 1114.0,540 1114.5,481 1115.0,546 1115.5,577 1116.0,562 1116.5,606 1117.0,583 1117.5,579 1118.0,549 1118.5,578 1119.0,522 1119.5,565 1120.0,586 1120.5,585 1121.0,601 1121.5,499 1122.0,546 1122.5,548 1123.0,544 1123.5,502 1124.0,602 1124.5,588 1125.0,568 1125.5,503 1126.0,563 1126.5,525 1127.0,553 1127.5,586 1128.0,570 1128.5,636 1129.0,648 1129.5,532 1130.0,600 1130.5,566 1131.0,623 1131.5,568 1132.0,602 1132.5,609 1133.0,538 1133.5,569 1134.0,587 1134.5,573 1135.0,542 1135.5,584 1136.0,573 1136.5,597 1137.0,632 1137.5,605 1138.0,521 1138.5,581 1139.0,533 1139.5,550 1140.0,509 1140.5,602 1141.0,649 1141.5,543 1142.0,593 1142.5,624 1143.0,487 1143.5,601 1144.0,588 1144.5,578 1145.0,596 1145.5,567 1146.0,570 1146.5,573 1147.0,551 1147.5,566 1148.0,578 1148.5,583 1149.0,572 1149.5,581 1150.0,577 1150.5,554 1151.0,566 1151.5,560 1152.0,567 1152.5,556 1153.0,551 1153.5,605 1154.0,565 1154.5,591 1155.0,492 1155.5,590 1156.0,558 1156.5,582 1157.0,528 1157.5,549 1158.0,504 1158.5,598 1159.0,522 1159.5,577 1160.0,584 1160.5,620 1161.0,608 1161.5,536 1162.0,543 1162.5,563 1163.0,617 1163.5,553 1164.0,544 1164.5,606 1165.0,608 1165.5,600 1166.0,566 1166.5,591 1167.0,575 1167.5,579 1168.0,580 1168.5,517 1169.0,526 1169.5,547 1170.0,523 1170.5,584 1171.0,570 1171.5,587 1172.0,554 1172.5,567 1173.0,598 1173.5,534 1174.0,566 1174.5,569 1175.0,555 1175.5,483 1176.0,595 1176.5,610 1177.0,552 1177.5,524 1178.0,575 1178.5,547 1179.0,573 1179.5,625 1180.0,554 1180.5,570 1181.0,570 1181.5,528 1182.0,586 1182.5,592 1183.0,562 1183.5,581 1184.0,558 1184.5,577 1185.0,471 1185.5,599 1186.0,585 1186.5,557 1187.0,616 1187.5,558 1188.0,559 1188.5,547 1189.0,605 1189.5,581 1190.0,534 1190.5,525 1191.0,575 1191.5,595 1192.0,536 1192.5,579 1193.0,570 1193.5,586 1194.0,592 1194.5,591 1195.0,630 1195.5,551 1196.0,568 1196.5,616 1197.0,564 1197.5,588 1198.0,566 1198.5,559 1199.0,606 1199.5,555 1200.0,632 1200.5,595 1201.0,549 1201.5,578 1202.0,566 1202.5,534 1203.0,550"/>
<polyline stroke="#5794f2" points="183.5,562 184.0,574 184.5,567 185.0,565 185.5,548 186.0,539 186.5,605 187.0,582 187.5,571 188.0,572 188.5,568 189.0,552 189.5,571 190.0,557 190.5,525 191.0,590 191.5,474 192.0,646 192.5,566 193.0,527 193.5,510 194.0,590 194.5,607 195.0,617 195.5,527 196.0,577 196.5,600 197.0,600 197.5,554 198.0,518 198.5,553 199.0,560 199.5,557 200.0,576 200.5,621 201.0,559 201.5,512 202.0,530 202.5,598 203.0,538 203.5,624 204.0,575 204.5,522 205.0,601 205.5,601 206.0,645 206.5,568 207.0,513 207.5,572 208.0,568 208.5,539 209.0,564 209.5,566 210.0,596 210.5,587 211.0,607 211.5,619 212.0,582 212.5,590 213.0,572 213.5,578 214.0,641 214.5,548 215.0,529 215.5,558 216.0,555 216.5,584 217.0,609 217.5,473 218.0,627 218.5,561 219.0,527 219.5,564 220.0,600 220.5,599 221.0,540 221.5,556 222.0,567 222.5,640 223.0,575 223.5,545 224.0,569 224.5,575 225.0,575 225.5,594 226.0,518 226.5,572 227.0,595 227.5,599 228.0,582 228.5,565 229.0,551 229.5,591 230.0,605 230.5,607 231.0,549 231.5,619 232.0,548 232.5,510 233.0,555 233.5,527 234.0,581 234.5,661 235.0,570 235.5,579 236.0,568 236.5,612 237.0,570 237.5,617 238.0,570 238.5,579 239.0,600 239.5,570 240.0,583 240.5,587 241.0,551 241.5,502 242.0,623 242.5,557 243.0,616 243.5,551 244.0,591 244.5,590 245.0,571 245.5,566 246.0,586 246.5,613 247.0,517 247.5,580 248.0,546 248.5,568 249.0,557 249.5,553 250.0,535 250.5,580 251.0,528 251.5,535 252.0,548 252.5,601 253.0,542 253.5,595 254.0,590 254.5,573 255.0,589 255.5,542 256.0,621 256.5,573 257.0,597 257.5,604 258.0,595 258.5,576 259.0,565 259.5,545 260.0,581 260.5,565 261.0,587 261.5,590 262.0,572 262.5,620 263.0,538 263.5,616 264.0,575 264.5,565 265.0,588 265.5,597 266.0,589 266.5,523 267.0,550 267.5,569 268.0,565 268.5,585 269.0,561 269.5,578 270.0,567 270.5,550 271.0,564 271.5,565 272.0,573 272.5,548 273.0,608 273.5,575 274.0,520 274.5,593 275.0,554 275.5,471 276.0,557 276.5,550 277.0,542 277.5,541 278.0,596 278.5,559 279.0,549 279.5,600 280.0,608 280.5,618 281.0,566 281.5,509 282.0,607 282.5,546 283.0,585 283.5,611 284.0,597 284.5,486 285.0,590 285.5,555 286.0,583 286.5,591 287.0,571 287.5,603 288.0,639 288.5,620 289.0,589 289.5,528 290.0,540 290.5,603 291.0,586 291.5,596 292.0,618 292.5,611 293.0,519 293.5,565 294.0,585 294.5,591 295.0,603 295.5,576 296.0,532 296.5,570 297.0,582 297.5,550 298.0,552 298.5,558 299.0,556 299.5,542 300.0,543 300.5,560 301.0,570 301.5,631 302.0,590 302.5,583 303.0,594 303.5,558 304.0,614 304.5,592 305.0,588 305.5,544 306.0,593 306.5,585 307.0,601 307.5,576 308.0,550 308.5,597 309.0,592 309.5,551 310.0,567 310.5,575 311.0,543 311.5,598 312.0,547 312.5,519 313.0,569 313.5,589 314.0,522 314.5,580 315.0,564 315.5,593 316.0,536 316.5,559 317.0,630 317.5,508 318.0,629 318.5,599 319.0,535 319.5,609 320.0,561 320.5,593 321.0,583 321.5,529 322.0,553 322.5,622 323.0,527 323.5,576 324.0,576 324.5,585 325.0,549 325.5,610 326.0,605 326.5,554 327.0,615 327.5,571 328.0,564 328.5,597 329.0,574 329.5,595 330.0,581 330.5,543 331.0,579 331.5,525 332.0,570 332.5,560 333.0,599 333.5,592 334.0,596 334.5,537 335.0,570 335.5,617 336.0,559 336.5,614 337.0,588 337.5,531 338.0,552 338.5,561 339.0,584 339.5,480 340.0,567 340.5,545 341.0,566 341.5,585 342.0,546 342.5,579 343.0,580 343.5,574 344.0,616 344.5,584 345.0,510 345.5,553 346.0,550 346.5,574 347.0,532 347.5,588 348.0,517 348.5,550 349.0,597 349.5,559 350.0,568 350.5,573 351.0,583 351.5,576 352.0,579 352.5,569 353.0,582 353.5,562 354.0,548 354.5,590 355.0,574 355.5,573 356.0,612 356.5,610 357.0,602 357.5,616 358.0,621 358.5,546 359.0,566 359.5,607 360.0,531 360.5,562 361.0,593 361.5,548 362.0,581 362.5,583 363.0,580 363.5,613 364.0,622 364.5,596 365.0,550 365.5,546 366.0,579 366.5,573 367.0,583 367.5,572 368.0,529 368.5,564 369.0,562 369.5,576 370.0,543 370.5,560 371.0,606 371.5,552 372.0,604 372.5,624 373.0,518 373.5,547 374.0,557 374.5,529 375.0,604 375.5,557 376.0,578 376.5,580 377.0,618 377.5,607 378.0,547 378.5,600 379.0,581 379.5,490 380.0,599 380.5,561 381.0,581 381.5,611 382.0,598 382.5,570 383.0,577 383.5,561 384.0,590 384.5,605 385.0,557 385.5,558 386.0,536 386.5,558 387.0,599 387.5,599 388.0,563 388.5,601 389.0,503 389.5,485 390.0,577 390.5,606 391.0,546 391.5,593 392.0,584 392.5,598 393.0,502 393.5,513 394.0,579 394.5,565 395.0,560 395.5,582 396.0,542 396.5,589 397.0,548 397.5,552 398.0,578 398.5,585 399.0,627 399.5,538 400.0,546 400.5,527 401.0,613 401.5,571 402.0,571 402.5,603 403.0,546 403.5,588 404.0,554 404.5,621 405.0,554 405.5,596 406.0,546 406.5,550 407.0,572 407.5,581 408.0,640 408.5,573 409.0,536 409.5,552 410.0,608 410.5,576 411.0,566 411.5,525 412.0,587 412.5,592 413.0,531 413.5,592 414.0,565 414.5,585 415.0,547 415.5,552 416.0,598 416.5,471 417.0,533 417.5,579 418.0,569 418.5,538 419.0,556 419.5,565 420.0,566 420.5,544 421.0,572 421.5,535 422.0,572 422.5,566 423.0,565 423.5,544 424.0,599 424.5,545 425.0,521 425.5,577 426.0,613 426.5,591 427.0,614 427.5,588 428.0,554 428.5,586 429.0,604 429.5,576 430.0,591 430.5,567 431.0,594 431.5,539 432.0,555 432.5,528 433.0,576 433.5,564 434.0,557 434.5,626 435.0,549 435.5,531 436.0,648 436.5,610 437.0,583 437.5,563 438.0,564 438.5,547 439.0,537 439.5,629 440.0,575 440.5,586 441.0,601 441.5,573 442.0,586 442.5,584 443.0,606 443.5,532 444.0,593 444.5,564 445.0,543 445.5,511 446.0,575 446.5,574 447.0,625 447.5,597 448.0,588 448.5,583 449.0,565 449.5,566 450.0,579 450.5,548 451.0,580 451.5,557 452.0,575 452.5,536 453.0,582 453.5,601 454.0,581 454.5,582 455.0,590 455.5,609 456.0,577 456.5,630 457.0,554 457.5,591 458.0,568 458.5,579 459.0,612 459.5,568 460.0,559 460.5,603 461.0,549 461.5,589 462.0,582 462.5,565 463.0,525 463.5,525 464.0,592 464.5,625 465.0,546 465.5,581 466.0,566 466.5,585 467.0,574 467.5,562 468.0,530 468.5,577 469.0,565 469.5,541 470.0,603 470.5,588 471.0,619 471.5,593 472.0,562 472.5,584 473.0,573 473.5,590 474.0,635 474.5,516 475.0,569 475.5,565 476.0,573 476.5,589 477.0,587 477.5,569 478.0,594 478.5,552 479.0,560 479.5,609 480.0,514 480.5,602 481.0,557 481.5,586 482.0,592 482.5,570 483.0,545 483.5,580 484.0,532 484.5,555 485.0,598 485.5,605 486.0,584 486.5,583 487.0,578 487.5,530 488.0,538 488.5,590 489.0,568 489.5,595 490.0,568 490.5,561 491.0,581 491.5,541 492.0,580 492.5,589 493.0,533 493.5,542 494.0,616 494.5,590 495.0,527 495.5,580 496.0,596 496.5,620 497.0,549 497.5,554 498.0,586 498.5,561 499.0,585 499.5,576 500.0,487 500.5,538 501.0,604 501.5,604 502.0,589 502.5,532 503.0,610 503.5,558 504.0,581 504.5,588 505.0,553 505.5,564 506.0,588 506.5,566 507.0,592 507.5,613 508.0,628 508.5,588 509.0,583 509.5,560 510.0,564 510.5,575 511.0,575 511.5,617 512.0,509 512.5,615 513.0,607 513.5,583 514.0,594 514.5,592 515.0,589 515.5,607 516.0,583 516.5,549 517.0,539 517.5,587 518.0,542 518.5,548 519.0,580 519.5,552 520.0,576 520.5,559 521.0,578 521.5,558 522.0,613 522.5,555 523.0,629 523.5,580 524.0,541 524.5,535 525.0,605 525.5,522 526.0,566 526.5,561 527.0,551 527.5,552 528.0,569 528.5,570 529.0,561 529.5,583 530.0,581 530.5,598 531.0,599 531.5,612 532.0,525 532.5,471 533.0,564 533.5,581 534.0,567 534.5,594 535.0,605 535.5,588 536.0,571 536.5,562 537.0,588 537.5,551 538.0,608 538.5,559 539.0,586 539.5,534 540.0,584 540.5,586 541.0,585 541.5,513 542.0,609 542.5,572 543.0,582 543.5,561 544.0,610 544.5,588 545.0,590 545.5,536 546.0,523 546.5,577 547.0,596 547.5,532 548.0,584 548.5,560 549.0,558 549.5,554 550.0,586 550.5,566 551.0,629 551.5,568 552.0,575 552.5,540 553.0,587 553.5,543 554.0,575 554.5,596 555.0,564 555.5,596 556.0,564 556.5,603 557.0,584 557.5,588 558.0,559 558.5,575 559.0,611 559.5,547 560.0,546 560.5,569 561.0,577 561.5,580 562.0,587 562.5,534 563.0,588 563.5,564 564.0,552 564.5,611 565.0,599 565.5,574 566.0,503 566.5,546 567.0,599 567.5,602 568.0,594 568.5,565 569.0,585 569.5,533 570.0,524 570.5,584 571.0,582 571.5,568 572.0,561 572.5,605 573.0,590 573.5,574 574.0,603 574.5,628 575.0,586 575.5,603 576.0,592 576.5,569 577.0,630 577.5,551 578.0,525 578.5,549 579.0,534 579.5,562 580.0,635 580.5,575 581.0,606 581.5,536 582.0,605 582.5,528 583.0,559 583.5,577 584.0,592 584.5,550 585.0,511 585.5,579 586.0,609 586.5,576 587.0,589 587.5,584 588.0,528 588.5,555 589.0,574 589.5,575 590.0,588 590.5,606 591.0,598 591.5,586 592.0,551 592.5,596 593.0,551 593.5,596 594.0,608 594.5,606 595.0,554 595.5,589 596.0,553 596.5,611 597.0,539 597.5,584 598.0,622 598.5,549 599.0,601 599.5,629 600.0,624 600.5,600 601.0,618 601.5,588 602.0,606 602.5,572 603.0,521 603.5,585 604.0,488 604.5,577 605.0,571 605.5,552 606.0,576 606.5,521 607.0,557 607.5,568 608.0,547 608.5,588 609.0,580 609.5,555 610.0,567 610.5,521 611.0,553 611.5,570 612.0,597 612.5,584 613.0,583 613.5,562 614.0,603 614.5,585 615.0,622 615.5,596 616.0,523 616.5,598 617.0,600 617.5,661 618.0,574 618.5,562 619.0,580 619.5,584 620.0,604 620.5,591 621.0,570 621.5,551 622.0,574 622.5,491 623.0,516 623.5,591 624.0,565 624.5,585 625.0,557 625.5,607 626.0,609 626.5,523 627.0,582 627.5,558 628.0,560 628.5,554 629.0,553 629.5,628 630.0,578 630.5,615 631.0,563 631.5,560 632.0,567 632.5,608 633.0,570 633.5,565 634.0,543 634.5,614 635.0,548 635.5,578 636.0,551 636.5,575 637.0,560 637.5,565 638.0,549 638.5,560 639.0,610 639.5,618 640.0,624 640.5,613 641.0,597 641.5,535 642.0,645 642.5,573 643.0,595 643.5,572 644.0,625 644.5,623 645.0,572 645.5,552 646.0,597 646.5,585 647.0,541 647.5,534 648.0,619 648.5,581 649.0,581 649.5,628 650.0,561 650.5,601 651.0,588 651.5,593 652.0,588 652.5,597 653.0,537 653.5,567 654.0,581 654.5,481 655.0,527 655.5,573 656.0,500 656.5,558 657.0,504 657.5,613 658.0,611 658.5,502 659.0,576 659.5,558 660.0,545 660.5,587 661.0,552 661.5,608 662.0,559 662.5,584 663.0,600 663.5,604 664.0,567 664.5,602 665.0,608 665.5,612 666.0,577 666.5,575 667.0,565 667.5,567 668.0,558 668.5,569 669.0,624 669.5,619 670.0,559 670.5,561 671.0,611 671.5,569 672.0,574 672.5,614 673.0,522 673.5,604 674.0,575 674.5,578 675.0,554 675.5,546 676.0,562 676.5,595 677.0,559 677.5,596 678.0,591 678.5,635 679.0,571 679.5,605 680.0,549 680.5,609 681.0,540 681.5,623 682.0,606 682.5,618 683.0,566 683.5,542 684.0,601 684.5,551 685.0,591 685.5,575 686.0,511 686.5,574 687.0,610 687.5,578 688.0,606 688.5,620 689.0,568 689.5,587 690.0,536 690.5,562 691.0,575 691.5,600 692.0,581 692.5,618 693.0,597 693.5,547 694.0,557 694.5,585 695.0,544 695.5,573 696.0,575 696.5,563 697.0,621 697.5,516 698.0,536 698.5,558 699.0,555 699.5,566 700.0,578 700.5,505 701.0,575 701.5,562 702.0,564 702.5,522 703.0,570 703.5,641 704.0,602 704.5,577 705.0,543 705.5,569 706.0,580 706.5,579 707.0,509 707.5,592 708.0,597 708.5,560 709.0,607 709.5,553 710.0,558 710.5,594 711.0,548 711.5,570 712.0,573 712.5,571 713.0,583 713.5,581 714.0,578 714.5,552 715.0,560 715.5,605 716.0,567 716.5,591 717.0,598 717.5,571 718.0,500 718.5,549 719.0,614 719.5,547 720.0,587 720.5,616 721.0,577 721.5,596 722.0,546 722.5,587 723.0,570 723.5,580 724.0,642 724.5,543 725.0,599 725.5,569 726.0,571 726.5,542 727.0,596 727.5,620 728.0,555 728.5,591 729.0,601 729.5,552 730.0,508 730.5,579 731.0,606 731.5,568 732.0,497 732.5,569 733.0,566 733.5,564 734.0,583 734.5,565 735.0,541 735.5,637 736.0,610 736.5,501 737.0,556 737.5,587 738.0,590 738.5,555 739.0,621 739.5,529 740.0,602 740.5,589 741.0,516 741.5,557 742.0,545 742.5,524 743.0,583 743.5,579 744.0,554 744.5,594 745.0,607 745.5,661 746.0,611 746.5,611 747.0,605 747.5,546 748.0,578 748.5,636 749.0,542 749.5,556 750.0,580 750.5,558 751.0,604 751.5,556 752.0,610 752.5,568 753.0,585 753.5,548 754.0,615 754.5,561 755.0,596 755.5,553 756.0,591 756.5,590 757.0,528 757.5,548 758.0,550 758.5,586 759.0,528 759.5,529 760.0,561 760.5,585 761.0,591 761.5,569 762.0,606 762.5,584 763.0,581 763.5,587 764.0,595 764.5,564 765.0,574 765.5,580 766.0,549 766.5,617 767.0,532 767.5,603 768.0,550 768.5,552 769.0,575 769.5,532 770.0,559 770.5,593 771.0,541 771.5,590 772.0,605 772.5,597 773.0,535 773.5,575 774.0,548 774.5,561 775.0,630 775.5,579 776.0,621 776.5,541 777.0,605 777.5,596 778.0,640 778.5,548 779.0,600 779.5,568 780.0,590 780.5,576 781.0,577 781.5,560 782.0,580 782.5,616 783.0,554 783.5,577 784.0,592 784.5,565 785.0,523 785.5,593 786.0,584 786.5,607 787.0,556 787.5,590 788.0,550 788.5,543 789.0,567 789.5,530 790.0,542 790.5,549 791.0,585 791.5,574 792.0,608 792.5,476 793.0,537 793.5,594 794.0,499 794.5,529 795.0,532 795.5,596 796.0,571 796.5,576 797.0,579 797.5,580 798.0,564 798.5,582 799.0,583 799.5,577 800.0,541 800.5,530 801.0,559 801.5,556 802.0,578 802.5,621 803.0,516 803.5,558 804.0,552 804.5,541 805.0,562 805.5,603 806.0,613 806.5,527 807.0,574 807.5,574 808.0,580 808.5,561 809.0,600 809.5,542 810.0,556 810.5,622 811.0,555 811.5,578 812.0,550 812.5,566 813.0,595 813.5,637 814.0,556 814.5,529 815.0,574 815.5,582 816.0,605 816.5,577 817.0,611 817.5,577 818.0,565 818.5,569 819.0,565 819.5,579 820.0,597 820.5,645 821.0,561 821.5,538 822.0,555 822.5,549 823.0,538 823.5,573 824.0,573 824.5,644 825.0,575 825.5,547 826.0,580 826.5,604 827.0,566 827.5,589 828.0,584 828.5,531 829.0,581 829.5,576 830.0,559 830.5,551 831.0,610 831.5,616 832.0,570 832.5,611 833.0,559 833.5,602 834.0,571 834.5,543 835.0,599 835.5,579 836.0,621 836.5,578 837.0,595 837.5,570 838.0,581 838.5,539 839.0,588 839.5,587 840.0,548 840.5,589 841.0,601 841.5,576 842.0,578 842.5,603 843.0,533 843.5,608 844.0,570 844.5,567 845.0,598 845.5,583 846.0,503 846.5,576 847.0,640 847.5,587 848.0,555 848.5,612 849.0,585 849.5,587 850.0,612 850.5,571 851.0,547 851.5,533 852.0,563 852.5,576 853.0,540 853.5,523 854.0,548 854.5,523 855.0,592 855.5,634 856.0,534 856.5,602 857.0,576 857.5,630 858.0,551 858.5,565 859.0,599 859.5,563 860.0,528 860.5,530 861.0,594 861.5,569 862.0,530 862.5,579 863.0,575 863.5,543 864.0,618 864.5,568 865.0,572 865.5,535 866.0,587 866.5,584 867.0,545 867.5,520 868.0,509 868.5,546 869.0,532 869.5,551 870.0,623 870.5,585 871.0,585 871.5,566 872.0,518 872.5,587 873.0,600 873.5,623 874.0,573 874.5,550 875.0,561 875.5,588 876.0,470 876.5,575 877.0,577 877.5,589 878.0,578 878.5,615 879.0,571 879.5,561 880.0,579 880.5,567 881.0,589 881.5,580 882.0,602 882.5,594 883.0,607 883.5,585 884.0,529 884.5,568 885.0,607 885.5,564 886.0,592 886.5,620 887.0,560 887.5,568 888.0,594 888.5,581 889.0,500 889.5,576 890.0,561 890.5,498 891.0,536 891.5,554 892.0,590 892.5,601 893.0,584 893.5,501 894.0,525 894.5,532 895.0,569 895.5,589 896.0,597 896.5,576 897.0,584 897.5,563 898.0,625 898.5,581 899.0,581 899.5,582 900.0,591 900.5,581 901.0,594 901.5,557 902.0,552 902.5,617 903.0,546 903.5,471 904.0,570 904.5,605 905.0,576 905.5,597 906.0,591 906.5,560 907.0,561 907.5,599 908.0,570 908.5,522 909.0,502 909.5,562 910.0,583 910.5,555 911.0,531 911.5,586 912.0,559 912.5,615 913.0,624 913.5,592 914.0,479 914.5,626 915.0,573 915.5,497 916.0,588 916.5,576 917.0,572 917.5,574 918.0,550 918.5,560 919.0,582 919.5,558 920.0,590 920.5,577 921.0,604 921.5,602 922.0,599 922.5,582 923.0,589 923.5,546 924.0,592 924.5,568 925.0,575 925.5,574 926.0,618 926.5,562 927.0,546 927.5,579 928.0,566 928.5,569 929.0,576 929.5,604 930.0,661 930.5,593 931.0,554 931.5,541 932.0,640 932.5,613 933.0,550 933.5,599 934.0,562 934.5,602 935.0,614 935.5,529 936.0,539 936.5,590 937.0,588 937.5,566 938.0,551 938.5,573 939.0,579 939.5,533 940.0,563 940.5,596 941.0,569 941.5,586 942.0,658 942.5,574 943.0,564 943.5,589 944.0,606 944.5,579 945.0,616 945.5,601 946.0,529 946.5,588 947.0,554 947.5,569 948.0,598 948.5,576 949.0,574 949.5,573 950.0,642 950.5,552 951.0,537 951.5,553 952.0,587 952.5,620 953.0,556 953.5,599 954.0,608 954.5,554 955.0,521 955.5,591 956.0,603 956.5,591 957.0,540 957.5,599 958.0,612 958.5,577 959.0,573 959.5,548 960.0,563 960.5,616 961.0,522 961.5,504 962.0,623 962.5,596 963.0,561 963.5,567 964.0,526 964.5,578 965.0,603 965.5,529 966.0,567 966.5,554 967.0,569 967.5,575 968.0,593 968.5,556 969.0,526 969.5,540 970.0,559 970.5,545 971.0,548 971.5,577 972.0,525 972.5,617 973.0,529 973.5,567 974.0,622 974.5,572 975.0,624 975.5,552 976.0,572 976.5,590 977.0,584 977.5,597 978.0,547 978.5,574 979.0,608 979.5,541 980.0,586 980.5,585 981.0,564 981.5,566 982.0,553 982.5,548 983.0,643 983.5,600 984.0,595 984.5,571 985.0,602 985.5,566 986.0,611 986.5,584 987.0,560 987.5,585 988.0,592 988.5,556 989.0,543 989.5,610 990.0,594 990.5,579 991.0,650 991.5,568 992.0,577 992.5,591 993.0,588 993.5,588 994.0,585 994.5,592 995.0,547 995.5,587 996.0,565 996.5,473 997.0,592 997.5,584 998.0,583 998.5,469 999.0,557 999.5,562 1000.0,537 1000.5,619 1001.0,603 1001.5,589 1002.0,593 1002.5,554 1003.0,578 1003.5,611 1004.0,540 1004.5,562 1005.0,498 1005.5,623 1006.0,623 1006.5,594 1007.0,582 1007.5,584 1008.0,605 1008.5,546 1009.0,579 1009.5,548 1010.0,520 1010.5,581 1011.0,615 1011.5,546 1012.0,529 1012.5,562 1013.0,559 1013.5,527 1014.0,546 1014.5,518 1015.0,554 1015.5,534 1016.0,550 1016.5,560 1017.0,588 1017.5,624 1018.0,569 1018.5,562 1019.0,569 1019.5,571 1020.0,545 1020.5,567 1021.0,565 1021.5,544 1022.0,518 1022.5,560 1023.0,557 1023.5,573 1024.0,567 1024.5,610 1025.0,564 1025.5,552 1026.0,572 1026.5,557 1027.0,538 1027.5,576 1028.0,546 1028.5,569 1029.0,605 1029.5,567 1030.0,529 1030.5,563 1031.0,613 1031.5,570 1032.0,548 1032.5,574 1033.0,586 1033.5,585 1034.0,594 1034.5,629 1035.0,584 1035.5,579 1036.0,586 1036.5,604 1037.0,618 1037.5,572 1038.0,569 1038.5,605 1039.0,634 1039.5,606 1040.0,568 1040.5,633 1041.0,598 1041.5,512 1042.0,571 1042.5,622 1043.0,594 1043.5,544 1044.0,515 1044.5,597 1045.0,574 1045.5,581 1046.0,579 1046.5,566 1047.0,569 1047.5,564 1048.0,561 1048.5,557 1049.0,575 1049.5,557 1050.0,574 1050.5,541 1051.0,573 1051.5,575 1052.0,533 1052.5,580 1053.0,585 1053.5,562 1054.0,582 1054.5,577 1055.0,591 1055.5,606 1056.0,598 1056.5,559 1057.0,645 1057.5,594 1058.0,581 1058.5,562 1059.0,590 1059.5,594 1060.0,576 1060.5,558 1061.0,595 1061.5,568 1062.0,600 1062.5,584 1063.0,565 1063.5,626 1064.0,557 1064.5,590 1065.0,579 1065.5,579 1066.0,601 1066.5,527 1067.0,522 1067.5,568 1068.0,565 1068.5,542 1069.0,562 1069.5,606 1070.0,564 1070.5,583 1071.0,579 1071.5,579 1072.0,540 1072.5,625 1073.0,568 1073.5,556 1074.0,608 1074.5,545 1075.0,534 1075.5,601 1076.0,538 1076.5,602 1077.0,575 1077.5,588 1078.0,545 1078.5,607 1079.0,572 1079.5,591 1080.0,580 1080.5,561 1081.0,559 1081.5,557 1082.0,557 1082.5,585 1083.0,589 1083.5,581 1084.0,570 1084.5,515 1085.0,591 1085.5,587 1086.0,615 1086.5,591 1087.0,586 1087.5,572 1088.0,515 1088.5,597 1089.0,549 1089.5,546 1090.0,543 1090.5,605 1091.0,591 1091.5,583 1092.0,565 1092.5,609 1093.0,558 1093.5,515 1094.0,552 1094.5,605 1095.0,547 1095.5,542 1096.0,560 1096.5,628 1097.0,594 1097.5,620 1098.0,563 1098.5,591 1099.0,555 1099.5,573 1100.0,521 1100.5,532 1101.0,550 1101.5,561 1102.0,588 1102.5,505 1103.0,570 1103.5,568 1104.0,621 1104.5,541 1105.0,547 1105.5,564 1106.0,542 1106.5,563 1107.0,567 1107.5,583 1108.0,547 1108.5,548 1109.0,517 1109.5,601 1110.0,583 1110.5,626 1111.0,591 1111.5,571 1112.0,520 1112.5,553 1113.0,560 1113.5,561 1114.0,586 1114.5,555 1115.0,501 1115.5,598 1116.0,568 1116.5,593 1117.0,562 1117.5,547 1118.0,583 1118.5,601 1119.0,588 1119.5,620 1120.0,560 1120.5,563 1121.0,557 1121.5,598 1122.0,575 1122.5,563 1123.0,623 1123.5,510 1124.0,608 1124.5,587 1125.0,544 1125.5,578 1126.0,638 1126.5,583 1127.0,553 1127.5,636 1128.0,554 1128.5,593 1129.0,553 1129.5,610 1130.0,560 1130.5,588 1131.0,593 1131.5,606 1132.0,600 1132.5,482 1133.0,597 1133.5,603 1134.0,583 1134.5,569 1135.0,587 1135.5,490 1136.0,585 1136.5,595 1137.0,584 1137.5,542 1138.0,569 1138.5,513 1139.0,571 1139.5,569 1140.0,614 1140.5,578 1141.0,559 1141.5,594 1142.0,574 1142.5,615 1143.0,553 1143.5,578 1144.0,603 1144.5,525 1145.0,572 1145.5,578 1146.0,523 1146.5,535 1147.0,530 1147.5,599 1148.0,588 1148.5,613 1149.0,563 1149.5,536 1150.0,612 1150.5,658 1151.0,577 1151.5,526 1152.0,567 1152.5,585 1153.0,581 1153.5,603 1154.0,563 1154.5,570 1155.0,564 1155.5,614 1156.0,562 1156.5,565 1157.0,528 1157.5,549 1158.0,567 1158.5,579 1159.0,579 1159.5,614 1160.0,562 1160.5,556 1161.0,522 1161.5,578 1162.0,542 1162.5,524 1163.0,548 1163.5,580 1164.0,608 1164.5,555 1165.0,534 1165.5,607 1166.0,624 1166.5,629 1167.0,565 1167.5,591 1168.0,538 1168.5,516 1169.0,549 1169.5,618 1170.0,566 1170.5,558 1171.0,548 1171.5,511 1172.0,594 1172.5,566 1173.0,582 1173.5,564 1174.0,603 1174.5,617 1175.0,502 1175.5,621 1176.0,525 1176.5,506 1177.0,576 1177.5,555 1178.0,527 1178.5,596 1179.0,586 1179.5,572 1180.0,580 1180.5,611 1181.0,550 1181.5,593 1182.0,565 1182.5,589 1183.0,532 1183.5,547 1184.0,550 1184.5,626 1185.0,594 1185.5,555 1186.0,566 1186.5,564 1187.0,599 1187.5,518 1188.0,597 1188.5,530 1189.0,593 1189.5,548 1190.0,604 1190.5,597 1191.0,573 1191.5,528 1192.0,564 1192.5,541 1193.0,605 1193.5,581 1194.0,611 1194.5,573 1195.0,560 1195.5,550 1196.0,577 1196.5,557 1197.0,601 1197.5,605 1198.0,607 1198.5,578 1199.0,578 1199.5,509 1200.0,587 1200.5,592 1201.0,493 1201.5,589 1202.0,586 1202.5,573 1203.0,543"/>
<polyline stroke="#fa6400" points="183.5,598 184.0,567 184.5,623 185.0,604 185.5,586 186.0,622 186.5,564 187.0,610 187.5,585 188.0,600 188.5,631 189.0,562 189.5,589 190.0,631 190.5,533 191.0,534 191.5,556 192.0,573 192.5,555 193.0,523 193.5,554 194.0,546 194.5,514 195.0,581 195.5,627 196.0,559 196.5,597 197.0,604 197.5,523 198.0,567 198.5,547 199.0,553 199.5,610 200.0,624 200.5,536 201.0,646 201.5,587 202.0,628 202.5,558 203.0,587 203.5,593 204.0,517 204.5,628 205.0,538 205.5,501 206.0,564 206.5,579 207.0,542 207.5,576 208.0,536 208.5,621 209.0,610 209.5,518 210.0,485 210.5,606 211.0,610 211.5,589 212.0,635 212.5,606 213.0,598 213.5,560 214.0,597 214.5,626 215.0,619 215.5,604 216.0,595 216.5,579 217.0,546 217.5,568 218.0,550 218.5,528 219.0,603 219.5,530 220.0,629 220.5,595 221.0,555 221.5,571 222.0,520 222.5,613 223.0,498 223.5,597 224.0,569 224.5,595 225.0,615 225.5,575 226.0,564 226.5,562 227.0,639 227.5,558 228.0,563 228.5,536 229.0,582 229.5,578 230.0,594 230.5,569 231.0,596 231.5,567 232.0,604 232.5,571 233.0,599 233.5,548 234.0,614 234.5,558 235.0,587 235.5,592 236.0,566 236.5,645 237.0,594 237.5,597 238.0,617 238.5,563 239.0,595 239.5,602 240.0,585 240.5,582 241.0,522 241.5,526 242.0,661 242.5,528 243.0,596 243.5,645 244.0,544 244.5,562 245.0,577 245.5,567 246.0,553 246.5,523 247.0,596 247.5,588 248.0,625 248.5,531 249.0,623 249.5,552 250.0,653 250.5,508 251.0,574 251.5,504 252.0,572 252.5,523 253.0,613 253.5,608 254.0,559 254.5,524 255.0,614 255.5,592 256.0,605 256.5,585 257.0,558 257.5,600 258.0,585 258.5,574 259.0,605 259.5,564 260.0,587 260.5,584 261.0,579 261.5,649 262.0,606 262.5,506 263.0,533 263.5,566 264.0,561 264.5,569 265.0,551 265.5,579 266.0,569 266.5,602 267.0,553 267.5,580 268.0,599 268.5,590 269.0,548 269.5,554 270.0,645 270.5,562 271.0,565 271.5,618 272.0,519 272.5,632 273.0,591 273.5,545 274.0,601 274.5,555 275.0,563 275.5,576 276.0,584 276.5,631 277.0,550 277.5,597 278.0,645 278.5,635 279.0,558 279.5,564 280.0,491 280.5,590 281.0,576 281.5,613 282.0,576 282.5,613 283.0,570 283.5,633 284.0,576 284.5,538 285.0,568 285.5,588 286.0,587 286.5,594 287.0,562 287.5,517 288.0,565 288.5,498 289.0,615 289.5,546 290.0,584 290.5,548 291.0,555 291.5,617 292.0,612 292.5,498 293.0,613 293.5,579 294.0,517 294.5,515 295.0,546 295.5,562 296.0,603 296.5,551 297.0,594 297.5,573 298.0,582 298.5,545 299.0,583 299.5,514 300.0,573 300.5,580 301.0,629 301.5,534 302.0,633 302.5,624 303.0,567 303.5,593 304.0,581 304.5,591 305.0,601 305.5,590 306.0,496 306.5,555 307.0,588 307.5,599 308.0,532 308.5,595 309.0,574 309.5,538 310.0,608 310.5,557 311.0,541 311.5,637 312.0,507 312.5,584 313.0,609 313.5,586 314.0,609 314.5,578 315.0,526 315.5,554 316.0,629 316.5,577 317.0,639 317.5,642 318.0,613 318.5,602 319.0,597 319.5,595 320.0,513 320.5,629 321.0,590 321.5,542 322.0,581 322.5,613 323.0,559 323.5,567 324.0,575 324.5,546 325.0,605 325.5,600 326.0,611 326.5,563 327.0,566 327.5,553 328.0,604 328.5,573 329.0,570 329.5,584 330.0,623 330.5,629 331.0,530 331.5,625 332.0,539 332.5,565 333.0,595 333.5,578 334.0,557 334.5,565 335.0,612 335.5,603 336.0,625 336.5,520 337.0,560 337.5,604 338.0,583 338.5,559 339.0,601 339.5,592 340.0,567 340.5,557 341.0,632 341.5,586 342.0,595 342.5,601 343.0,549 343.5,558 344.0,543 344.5,544 345.0,577 345.5,584 346.0,575 346.5,611 347.0,569 347.5,560 348.0,580 348.5,574 349.0,552 349.5,577 350.0,601 350.5,560 351.0,639 351.5,574 352.0,549 352.5,581 353.0,589 353.5,586 354.0,634 354.5,624 355.0,579 355.5,645 356.0,613 356.5,591 357.0,524 357.5,597 358.0,661 358.5,574 359.0,591 359.5,626 360.0,618 360.5,534 361.0,536 361.5,585 362.0,557 362.5,638 363.0,605 363.5,539 364.0,549 364.5,596 365.0,547 365.5,617 366.0,578 366.5,517 367.0,616 367.5,587 368.0,610 368.5,586 369.0,552 369.5,524 370.0,557 370.5,545 371.0,569 371.5,545 372.0,577 372.5,623 373.0,566 373.5,600 374.0,571 374.5,555 375.0,589 375.5,529 376.0,586 376.5,577 377.0,591 377.5,544 378.0,616 378.5,607 379.0,565 379.5,560 380.0,607 380.5,587 381.0,574 381.5,566 382.0,578 382.5,578 383.0,574 383.5,564 384.0,589 384.5,568 385.0,619 385.5,602 386.0,601 386.5,576 387.0,540 387.5,534 388.0,597 388.5,582 389.0,573 389.5,589 390.0,593 390.5,636 391.0,568 391.5,614 392.0,580 392.5,574 393.0,540 393.5,616 394.0,581 394.5,600 395.0,586 395.5,617 396.0,575 396.5,611 397.0,555 397.5,571 398.0,649 398.5,600 399.0,598 399.5,622 400.0,587 400.5,574 401.0,583 401.5,593 402.0,600 402.5,620 403.0,617 403.5,591 404.0,553 404.5,536 405.0,654 405.5,613 406.0,566 406.5,531 407.0,567 407.5,632 408.0,557 408.5,591 409.0,552 409.5,558 410.0,583 410.5,609 411.0,531 411.5,592 412.0,554 412.5,586 413.0,542 413.5,575 414.0,530 414.5,622 415.0,564 415.5,634 416.0,571 416.5,561 417.0,570 417.5,566 418.0,558 418.5,578 419.0,561 419.5,583 420.0,599 420.5,603 421.0,578 421.5,610 422.0,575 422.5,593 423.0,551 423.5,575 424.0,591 424.5,557 425.0,559 425.5,594 426.0,546 426.5,509 427.0,630 427.5,623 428.0,579 428.5,558 429.0,581 429.5,598 430.0,578 430.5,556 431.0,607 431.5,585 432.0,554 432.5,556 433.0,618 433.5,547 434.0,572 434.5,589 435.0,521 435.5,529 436.0,556 436.5,603 437.0,575 437.5,615 438.0,587 438.5,525 439.0,651 439.5,603 440.0,635 440.5,518 441.0,616 441.5,597 442.0,645 442.5,552 443.0,581 443.5,550 444.0,563 444.5,622 445.0,617 445.5,562 446.0,603 446.5,556 447.0,545 447.5,601 448.0,576 448.5,568 449.0,551 449.5,587 450.0,568 450.5,514 451.0,569 451.5,618 452.0,617 452.5,602 453.0,600 453.5,577 454.0,556 454.5,543 455.0,613 455.5,596 456.0,566 456.5,585 457.0,587 457.5,633 458.0,589 458.5,598 459.0,546 459.5,568 460.0,607 460.5,661 461.0,552 461.5,593 462.0,555 462.5,562 463.0,562 463.5,526 464.0,628 464.5,563 465.0,599 465.5,610 466.0,563 466.5,552 467.0,568 467.5,625 468.0,568 468.5,568 469.0,596 469.5,557 470.0,632 470.5,587 471.0,574 471.5,578 472.0,557 472.5,544 473.0,597 473.5,546 474.0,583 474.5,523 475.0,610 475.5,597 476.0,540 476.5,616 477.0,611 477.5,597 478.0,601 478.5,619 479.0,595 479.5,562 480.0,606 480.5,518 481.0,577 481.5,659 482.0,536 482.5,545 483.0,586 483.5,603 484.0,591 484.5,564 485.0,542 485.5,556 486.0,582 486.5,567 487.0,577 487.5,587 488.0,614 488.5,552 489.0,509 489.5,544 490.0,575 490.5,607 491.0,608 491.5,602 492.0,541 492.5,524 493.0,607 493.5,610 494.0,552 494.5,590 495.0,598 495.5,565 496.0,580 496.5,592 497.0,594 497.5,568 498.0,558 498.5,559 499.0,577 499.5,612 500.0,598 500.5,554 501.0,588 501.5,581 502.0,522 502.5,556 503.0,622 503.5,560 504.0,580 504.5,529 505.0,545 505.5,604 506.0,564 506.5,618 507.0,562 507.5,555 508.0,547 508.5,563 509.0,500 509.5,606 510.0,566 510.5,625 511.0,596 511.5,483 512.0,607 512.5,572 513.0,628 513.5,557 514.0,628 514.5,635 515.0,627 515.5,604 516.0,592 516.5,510 517.0,566 517.5,649 518.0,574 518.5,501 519.0,594 519.5,619 520.0,626 520.5,581 521.0,608 521.5,595 522.0,578 522.5,585 523.0,571 523.5,602 524.0,601 524.5,609 525.0,588 525.5,583 526.0,658 526.5,549 527.0,524 527.5,572 528.0,579 528.5,638 529.0,551 529.5,624 530.0,537 530.5,578 531.0,542 531.5,569 532.0,588 532.5,580 533.0,585 533.5,619 534.0,574 534.5,546 535.0,579 535.5,575 536.0,606 536.5,563 537.0,566 537.5,561 538.0,590 538.5,603 539.0,639 539.5,610 540.0,606 540.5,589 541.0,560 541.5,626 542.0,596 542.5,598 543.0,581 543.5,566 544.0,582 544.5,562 545.0,580 545.5,616 546.0,589 546.5,566 547.0,593 547.5,593 548.0,596 548.5,650 549.0,540 549.5,582 550.0,595 550.5,637 551.0,631 551.5,579 552.0,525 552.5,576 553.0,609 553.5,623 554.0,568 554.5,595 555.0,634 555.5,572 556.0,539 556.5,610 557.0,583 557.5,580 558.0,550 558.5,572 559.0,558 559.5,562 560.0,563 560.5,523 561.0,619 561.5,584 562.0,585 562.5,562 563.0,623 563.5,587 564.0,507 564.5,587 565.0,618 565.5,585 566.0,661 566.5,610 567.0,627 567.5,592 568.0,498 568.5,539 569.0,536 569.5,590 570.0,567 570.5,522 571.0,542 571.5,556 572.0,569 572.5,557 573.0,612 573.5,634 574.0,597 574.5,584 575.0,597 575.5,549 576.0,548 576.5,552 577.0,598 577.5,576 578.0,612 578.5,604 579.0,589 579.5,587 580.0,599 580.5,602 581.0,586 581.5,554 582.0,594 582.5,644 583.0,602 583.5,607 584.0,574 584.5,587 585.0,500 585.5,521 586.0,584 586.5,562 587.0,579 587.5,611 588.0,628 588.5,564 589.0,619 589.5,594 590.0,622 590.5,611 591.0,563 591.5,561 592.0,498 592.5,552 593.0,566 593.5,580 594.0,574 594.5,625 595.0,606 595.5,582 596.0,574 596.5,559 597.0,609 597.5,560 598.0,559 598.5,609 599.0,551 599.5,580 600.0,524 600.5,547 601.0,617 601.5,600 602.0,596 602.5,595 603.0,612 603.5,539 604.0,565 604.5,551 605.0,592 605.5,582 606.0,581 606.5,625 607.0,607 607.5,556 608.0,573 608.5,600 609.0,599 609.5,609 610.0,574 610.5,604 611.0,592 611.5,610 612.0,561 612.5,524 613.0,606 613.5,536 614.0,625 614.5,518 615.0,521 615.5,537 616.0,597 616.5,592 617.0,523 617.5,567 618.0,598 618.5,525 619.0,565 619.5,579 620.0,658 620.5,652 621.0,612 621.5,611 622.0,611 622.5,648 623.0,599 623.5,589 624.0,582 624.5,580 625.0,578 625.5,550 626.0,622 626.5,590 627.0,582 627.5,595 628.0,543 628.5,573 629.0,568 629.5,551 630.0,607 630.5,595 631.0,575 631.5,513 632.0,536 632.5,575 633.0,613 633.5,574 634.0,592 634.5,586 635.0,640 635.5,634 636.0,609 636.5,575 637.0,593 637.5,499 638.0,575 638.5,614 639.0,619 639.5,648 640.0,552 640.5,566 641.0,584 641.5,585 642.0,605 642.5,498 643.0,562 643.5,495 644.0,630 644.5,570 645.0,607 645.5,585 646.0,661 646.5,627 647.0,582 647.5,609 648.0,568 648.5,596 649.0,583 649.5,582 650.0,581 650.5,539 651.0,551 651.5,609 652.0,575 652.5,630 653.0,586 653.5,543 654.0,508 654.5,509 655.0,546 655.5,505 656.0,626 656.5,527 657.0,606 657.5,586 658.0,582 658.5,519 659.0,614 659.5,588 660.0,507 660.5,616 661.0,545 661.5,604 662.0,579 662.5,572 663.0,566 663.5,598 664.0,610 664.5,618 665.0,598 665.5,613 666.0,554 666.5,591 667.0,600 667.5,553 668.0,571 668.5,621 669.0,513 669.5,590 670.0,644 670.5,590 671.0,599 671.5,542 672.0,568 672.5,597 673.0,600 673.5,603 674.0,603 674.5,595 675.0,650 675.5,545 676.0,567 676.5,582 677.0,606 677.5,570 678.0,564 678.5,584 679.0,567 679.5,580 680.0,606 680.5,594 681.0,592 681.5,579 682.0,584 682.5,548 683.0,581 683.5,635 684.0,558 684.5,595 685.0,579 685.5,580 686.0,511 686.5,566 687.0,632 687.5,567 688.0,593 688.5,563 689.0,624 689.5,561 690.0,529 690.5,589 691.0,583 691.5,549 692.0,525 692.5,556 693.0,557 693.5,617 694.0,592 694.5,605 695.0,619 695.5,582 696.0,581 696.5,581 697.0,631 697.5,550 698.0,526 698.5,625 699.0,523 699.5,599 700.0,560 700.5,592 701.0,635 701.5,624 702.0,581 702.5,595 703.0,594 703.5,599 704.0,619 704.5,573 705.0,591 705.5,549 706.0,551 706.5,526 707.0,584 707.5,562 708.0,496 708.5,648 709.0,541 709.5,557 710.0,587 710.5,602 711.0,574 711.5,572 712.0,581 712.5,615 713.0,591 713.5,606 714.0,588 714.5,639 715.0,610 715.5,549 716.0,539 716.5,612 717.0,541 717.5,533 718.0,582 718.5,565 719.0,612 719.5,549 720.0,530 720.5,535 721.0,535 721.5,604 722.0,493 722.5,560 723.0,551 723.5,608 724.0,609 724.5,575 725.0,618 725.5,509 726.0,566 726.5,557 727.0,609 727.5,582 728.0,587 728.5,596 729.0,584 729.5,508 730.0,597 730.5,572 731.0,579 731.5,588 732.0,635 732.5,557 733.0,572 733.5,586 734.0,621 734.5,591 735.0,555 735.5,538 736.0,578 736.5,591 737.0,597 737.5,558 738.0,526 738.5,606 739.0,576 739.5,586 740.0,568 740.5,546 741.0,609 741.5,551 742.0,553 742.5,540 743.0,580 743.5,661 744.0,609 744.5,560 745.0,615 745.5,566 746.0,546 746.5,594 747.0,548 747.5,609 748.0,564 748.5,597 749.0,566 749.5,522 750.0,539 750.5,582 751.0,620 751.5,587 752.0,606 752.5,602 753.0,584 753.5,607 754.0,565 754.5,554 755.0,495 755.5,522 756.0,610 756.5,580 757.0,623 757.5,627 758.0,567 758.5,543 759.0,602 759.5,576 760.0,549 760.5,627 761.0,604 761.5,589 762.0,595 762.5,602 763.0,611 763.5,593 764.0,605 764.5,560 765.0,619 765.5,596 766.0,572 766.5,580 767.0,529 767.5,583 768.0,566 768.5,616 769.0,633 769.5,592 770.0,551 770.5,593 771.0,620 771.5,543 772.0,593 772.5,591 773.0,604 773.5,537 774.0,584 774.5,564 775.0,631 775.5,585 776.0,611 776.5,479 777.0,558 777.5,625 778.0,583 778.5,595 779.0,579 779.5,597 780.0,583 780.5,589 781.0,540 781.5,610 782.0,611 782.5,593 783.0,578 783.5,614 784.0,638 784.5,585 785.0,576 785.5,594 786.0,527 786.5,584 787.0,561 787.5,568 788.0,563 788.5,629 789.0,513 789.5,526 790.0,598 790.5,530 791.0,591 791.5,559 792.0,578 792.5,585 793.0,560 793.5,566 794.0,470 794.5,590 795.0,586 795.5,581 796.0,541 796.5,620 797.0,598 797.5,570 798.0,556 798.5,558 799.0,570 799.5,602 800.0,628 800.5,599 801.0,574 801.5,583 802.0,548 802.5,593 803.0,621 803.5,596 804.0,588 804.5,582 805.0,569 805.5,643 806.0,641 806.5,503 807.0,625 807.5,563 808.0,541 808.5,629 809.0,585 809.5,595 810.0,624 810.5,609 811.0,615 811.5,623 812.0,557 812.5,545 813.0,558 813.5,580 814.0,588 814.5,620 815.0,654 815.5,519 816.0,598 816.5,565 817.0,577 817.5,613 818.0,624 818.5,649 819.0,623 819.5,577 820.0,553 820.5,616 821.0,570 821.5,579 822.0,620 822.5,566 823.0,509 823.5,527 824.0,631 824.5,558 825.0,600 825.5,621 826.0,637 826.5,586 827.0,605 827.5,562 828.0,541 828.5,628 829.0,594 829.5,566 830.0,600 830.5,601 831.0,564 831.5,547 832.0,574 832.5,602 833.0,550 833.5,592 834.0,592 834.5,624 835.0,554 835.5,602 836.0,524 836.5,646 837.0,650 837.5,579 838.0,526 838.5,574 839.0,533 839.5,568 840.0,567 840.5,618 841.0,497 841.5,606 842.0,506 842.5,539 843.0,556 843.5,590 844.0,626 844.5,557 845.0,520 845.5,564 846.0,599 846.5,524 847.0,537 847.5,544 848.0,614 848.5,568 849.0,615 849.5,612 850.0,542 850.5,588 851.0,600 851.5,601 852.0,546 852.5,579 853.0,591 853.5,591 854.0,607 854.5,629 855.0,560 855.5,643 856.0,586 856.5,592 857.0,596 857.5,569 858.0,568 858.5,572 859.0,601 859.5,618 860.0,577 860.5,611 861.0,565 861.5,578 862.0,575 862.5,595 863.0,597 863.5,622 864.0,659 864.5,565 865.0,655 865.5,585 866.0,577 866.5,597 867.0,583 867.5,625 868.0,556 868.5,577 869.0,575 869.5,615 870.0,580 870.5,580 871.0,568 871.5,597 872.0,552 872.5,602 873.0,542 873.5,614 874.0,570 874.5,602 875.0,603 875.5,597 876.0,595 876.5,559 877.0,618 877.5,627 878.0,562 878.5,568 879.0,588 879.5,620 880.0,590 880.5,574 881.0,578 881.5,604 882.0,582 882.5,558 883.0,518 883.5,591 884.0,607 884.5,588 885.0,579 885.5,562 886.0,548 886.5,536 887.0,580 887.5,588 888.0,564 888.5,581 889.0,542 889.5,603 890.0,581 890.5,596 891.0,573 891.5,574 892.0,644 892.5,563 893.0,582 893.5,575 894.0,615 894.5,608 895.0,601 895.5,572 896.0,557 896.5,551 897.0,567 897.5,583 898.0,582 898.5,629 899.0,508 899.5,591 900.0,561 900.5,628 901.0,619 901.5,618 902.0,586 902.5,587 903.0,543 903.5,586 904.0,558 904.5,542 905.0,589 905.5,563 906.0,597 906.5,580 907.0,602 907.5,627 908.0,587 908.5,573 909.0,543 909.5,613 910.0,602 910.5,554 911.0,581 911.5,603 912.0,593 912.5,620 913.0,621 913.5,540 914.0,612 914.5,578 915.0,575 915.5,571 916.0,594 916.5,563 917.0,542 917.5,603 918.0,567 918.5,574 919.0,592 919.5,566 920.0,608 920.5,595 921.0,563 921.5,606 922.0,564 922.5,609 923.0,578 923.5,546 924.0,609 924.5,596 925.0,558 925.5,542 926.0,601 926.5,639 927.0,584 927.5,593 928.0,564 928.5,636 929.0,584 929.5,588 930.0,575 930.5,539 931.0,586 931.5,584 932.0,574 932.5,616 933.0,571 933.5,632 934.0,552 934.5,648 935.0,566 935.5,615 936.0,561 936.5,584 937.0,588 937.5,592 938.0,607 938.5,590 939.0,588 939.5,527 940.0,582 940.5,624 941.0,632 941.5,601 942.0,626 942.5,554 943.0,557 943.5,588 944.0,621 944.5,603 945.0,574 945.5,534 946.0,611 946.5,580 947.0,633 947.5,633 948.0,581 948.5,560 949.0,610 949.5,642 950.0,624 950.5,620 951.0,581 951.5,591 952.0,564 952.5,588 953.0,587 953.5,619 954.0,611 954.5,566 955.0,579 955.5,591 956.0,574 956.5,612 957.0,611 957.5,586 958.0,520 958.5,542 959.0,604 959.5,595 960.0,577 960.5,573 961.0,608 961.5,619 962.0,551 962.5,621 963.0,564 963.5,620 964.0,569 964.5,572 965.0,601 965.5,546 966.0,622 966.5,590 967.0,525 967.5,512 968.0,603 968.5,610 969.0,536 969.5,578 970.0,573 970.5,582 971.0,616 971.5,624 972.0,587 972.5,608 973.0,564 973.5,538 974.0,572 974.5,528 975.0,597 975.5,614 976.0,596 976.5,578 977.0,588 977.5,510 978.0,537 978.5,611 979.0,569 979.5,556 980.0,581 980.5,512 981.0,554 981.5,579 982.0,601 982.5,587 983.0,627 983.5,528 984.0,602 984.5,521 985.0,598 985.5,561 986.0,592 986.5,603 987.0,561 987.5,557 988.0,631 988.5,521 989.0,605 989.5,553 990.0,619 990.5,535 991.0,613 991.5,627 992.0,517 992.5,500 993.0,500 993.5,589 994.0,594 994.5,642 995.0,527 995.5,597 996.0,560 996.5,570 997.0,613 997.5,517 998.0,593 998.5,596 999.0,588 999.5,571 1000.0,608 1000.5,534 1001.0,610 1001.5,552 1002.0,556 1002.5,542 1003.0,574 1003.5,583 1004.0,551 1004.5,568 1005.0,547 1005.5,591 1006.0,567 1006.5,526 1007.0,589 1007.5,603 1008.0,547 1008.5,627 1009.0,580 1009.5,567 1010.0,620 1010.5,582 1011.0,533 1011.5,552 1012.0,572 1012.5,612 1013.0,556 1013.5,584 1014.0,562 1014.5,453 1015.0,557 1015.5,609 1016.0,588 1016.5,584 1017.0,588 1017.5,583 1018.0,610 1018.5,586 1019.0,589 1019.5,565 1020.0,562 1020.5,650 1021.0,570 1021.5,557 1022.0,494 1022.5,587 1023.0,595 1023.5,593 1024.0,565 1024.5,623 1025.0,593 1025.5,616 1026.0,617 1026.5,558 1027.0,504 1027.5,613 1028.0,550 1028.5,554 1029.0,555 1029.5,536 1030.0,533 1030.5,608 1031.0,630 1031.5,570 1032.0,577 1032.5,542 1033.0,544 1033.5,581 1034.0,556 1034.5,599 1035.0,562 1035.5,589 1036.0,596 1036.5,661 1037.0,578 1037.5,653 1038.0,559 1038.5,563 1039.0,564 1039.5,614 1040.0,610 1040.5,582 1041.0,587 1041.5,552 1042.0,571 1042.5,595 1043.0,593 1043.5,581 1044.0,594 1044.5,612 1045.0,560 1045.5,572 1046.0,597 1046.5,636 1047.0,586 1047.5,551 1048.0,581 1048.5,563 1049.0,608 1049.5,535 1050.0,557 1050.5,598 1051.0,576 1051.5,634 1052.0,586 1052.5,585 1053.0,565 1053.5,484 1054.0,605 1054.5,628 1055.0,638 1055.5,604 1056.0,573 1056.5,537 1057.0,553 1057.5,615 1058.0,561 1058.5,587 1059.0,559 1059.5,553 1060.0,624 1060.5,570 1061.0,610 1061.5,588 1062.0,575 1062.5,558 1063.0,579 1063.5,547 1064.0,514 1064.5,603 1065.0,528 1065.5,636 1066.0,617 1066.5,563 1067.0,603 1067.5,648 1068.0,587 1068.5,643 1069.0,579 1069.5,585 1070.0,626 1070.5,593 1071.0,514 1071.5,555 1072.0,625 1072.5,609 1073.0,534 1073.5,575 1074.0,572 1074.5,527 1075.0,630 1075.5,608 1076.0,610 1076.5,661 1077.0,640 1077.5,619 1078.0,551 1078.5,523 1079.0,574 1079.5,604 1080.0,551 1080.5,626 1081.0,563 1081.5,576 1082.0,593 1082.5,600 1083.0,580 1083.5,624 1084.0,552 1084.5,603 1085.0,540 1085.5,529 1086.0,599 1086.5,572 1087.0,599 1087.5,546 1088.0,614 1088.5,591 1089.0,553 1089.5,580 1090.0,573 1090.5,636 1091.0,605 1091.5,574 1092.0,541 1092.5,607 1093.0,578 1093.5,537 1094.0,544 1094.5,507 1095.0,605 1095.5,589 1096.0,554 1096.5,553 1097.0,568 1097.5,592 1098.0,588 1098.5,506 1099.0,566 1099.5,553 1100.0,585 1100.5,549 1101.0,568 1101.5,541 1102.0,573 1102.5,556 1103.0,602 1103.5,614 1104.0,588 1104.5,587 1105.0,637 1105.5,643 1106.0,621 1106.5,542 1107.0,537 1107.5,581 1108.0,538 1108.5,661 1109.0,556 1109.5,551 1110.0,556 1110.5,592 1111.0,590 1111.5,573 1112.0,588 1112.5,527 1113.0,539 1113.5,611 1114.0,592 1114.5,542 1115.0,600 1115.5,597 1116.0,572 1116.5,593 1117.0,595 1117.5,557 1118.0,610 1118.5,618 1119.0,547 1119.5,653 1120.0,549 1120.5,605 1121.0,628 1121.5,588 1122.0,580 1122.5,566 1123.0,605 1123.5,548 1124.0,611 1124.5,618 1125.0,561 1125.5,579 1126.0,593 1126.5,517 1127.0,550 1127.5,606 1128.0,592 1128.5,583 1129.0,614 1129.5,535 1130.0,601 1130.5,579 1131.0,576 1131.5,619 1132.0,622 1132.5,572 1133.0,570 1133.5,563 1134.0,633 1134.5,560 1135.0,605 1135.5,565 1136.0,546 1136.5,606 1137.0,613 1137.5,563 1138.0,626 1138.5,564 1139.0,587 1139.5,521 1140.0,588 1140.5,553 1141.0,599 1141.5,602 1142.0,592 1142.5,588 1143.0,603 1143.5,571 1144.0,588 1144.5,626 1145.0,565 1145.5,561 1146.0,602 1146.5,573 1147.0,607 1147.5,545 1148.0,600 1148.5,615 1149.0,623 1149.5,626 1150.0,618 1150.5,559 1151.0,576 1151.5,564 1152.0,630 1152.5,613 1153.0,610 1153.5,567 1154.0,590 1154.5,556 1155.0,588 1155.5,618 1156.0,609 1156.5,570 1157.0,596 1157.5,556 1158.0,558 1158.5,572 1159.0,608 1159.5,541 1160.0,521 1160.5,575 1161.0,567 1161.5,601 1162.0,539 1162.5,562 1163.0,606 1163.5,596 1164.0,521 1164.5,523 1165.0,575 1165.5,553 1166.0,554 1166.5,608 1167.0,634 1167.5,613 1168.0,596 1168.5,571 1169.0,617 1169.5,545 1170.0,584 1170.5,614 1171.0,560 1171.5,574 1172.0,590 1172.5,607 1173.0,598 1173.5,585 1174.0,598 1174.5,656 1175.0,540 1175.5,539 1176.0,608 1176.5,524 1177.0,545 1177.5,626 1178.0,564 1178.5,570 1179.0,653 1179.5,588 1180.0,582 1180.5,598 1181.0,540 1181.5,547 1182.0,578 1182.5,606 1183.0,572 1183.5,623 1184.0,532 1184.5,499 1185.0,559 1185.5,560 1186.0,559 1186.5,592 1187.0,567 1187.5,587 1188.0,612 1188.5,557 1189.0,622 1189.5,589 1190.0,557 1190.5,659 1191.0,595 1191.5,575 1192.0,595 1192.5,572 1193.0,539 1193.5,614 1194.0,593 1194.5,632 1195.0,553 1195.5,579 1196.0,557 1196.5,614 1197.0,572 1197.5,554 1198.0,579 1198.5,598 1199.0,544 1199.5,588 1200.0,619 1200.5,601 1201.0,592 1201.5,587 1202.0,598 1202.5,590 1203.0,571"/>
</g>
<g font-family="Liberation Sans" font-size="12" fill="#464c54"><text x="177" y="424.0" text-anchor="end" letter-spacing="0.5">33.225 °C</text><text x="177" y="460.7" text-anchor="end" letter-spacing="0.5">33.2 °C</text><text x="177" y="497.4" text-anchor="end" letter-spacing="0.5">33.175 °C</text><text x="177" y="534.1" text-anchor="end" letter-spacing="0.5">33.15 °C</text><text x="177" y="570.9" text-anchor="end" letter-spacing="0.5">33.125 °C</text><text x="177" y="607.6" text-anchor="end" letter-spacing="0.5">33.1 °C</text><text x="177" y="644.3" text-anchor="end" letter-spacing="0.5">33.075 °C</text><text x="177" y="681.0" text-anchor="end" letter-spacing="0.5">33.05 °C</text><text x="1211" y="435.0" letter-spacing="0.55">0.2 mm/s</text><text x="1211" y="471.7" letter-spacing="0.55">0.18 mm/s</text><text x="1211" y="508.4" letter-spacing="0.55">0.16 mm/s</text><text x="1211" y="545.1" letter-spacing="0.55">0.14 mm/s</text><text x="1211" y="581.8" letter-spacing="0.55">0.12 mm/s</text><text x="1211" y="618.5" letter-spacing="0.55">0.1 mm/s</text><text x="1211" y="655.2" letter-spacing="0.55">0.08 mm/s</text><text x="1211" y="691.9" letter-spacing="0.55">0.06 mm/s</text><text x="192.7" y="725" text-anchor="middle" letter-spacing="0.35">13:47:00</text><text x="295.0" y="725" text-anchor="middle" letter-spacing="0.35">13:48:00</text><text x="397.4" y="725" text-anchor="middle" letter-spacing="0.35">13:49:00</text><text x="499.7" y="725" text-anchor="middle" letter-spacing="0.35">13:50:00</text><text x="602.0" y="725" text-anchor="middle" letter-spacing="0.35">13:51:00</text><text x="704.4" y="725" text-anchor="middle" letter-spacing="0.35">13:52:00</text><text x="806.7" y="725" text-anchor="middle" letter-spacing="0.35">13:53:00</text><text x="909.0" y="725" text-anchor="middle" letter-spacing="0.35">13:54:00</text><text x="1011.4" y="725" text-anchor="middle" letter-spacing="0.35">13:55:00</text><text x="1113.7" y="725" text-anchor="middle" letter-spacing="0.35">13:56:00</text></g>
</svg>

<!-- legend -->
<div class="abs" style="left:1281px;top:412px;width:14px;height:4px;border-radius:2px;background:#56a64b"></div>
<div class="abs" style="left:1281px;top:435px;width:14px;height:4px;border-radius:2px;background:#e0b400"></div>
<div class="abs" style="left:1281px;top:458px;width:14px;height:4px;border-radius:2px;background:#5794f2"></div>
<div class="abs" style="left:1281px;top:481px;width:14px;height:4px;border-radius:2px;background:#fa6400"></div>
<div class="t" style="left:1302px;top:407px;font-size:13.1px;color:#24292e">port1.Contact Temperature Contact Temperature [°C]</div>
<div class="t" style="left:1302px;top:430px;font-size:13px;color:#24292e">port1.Vibration Velocity RMS v-RMS X [mm/s]</div>
<div class="t" style="left:1302px;top:453px;font-size:13px;color:#24292e">port1.Vibration Velocity RMS v-RMS Y [mm/s]</div>
<div class="t" style="left:1302px;top:476px;font-size:13px;color:#24292e">port1.Vibration Velocity RMS v-RMS Z [mm/s]</div>

</body></html>
